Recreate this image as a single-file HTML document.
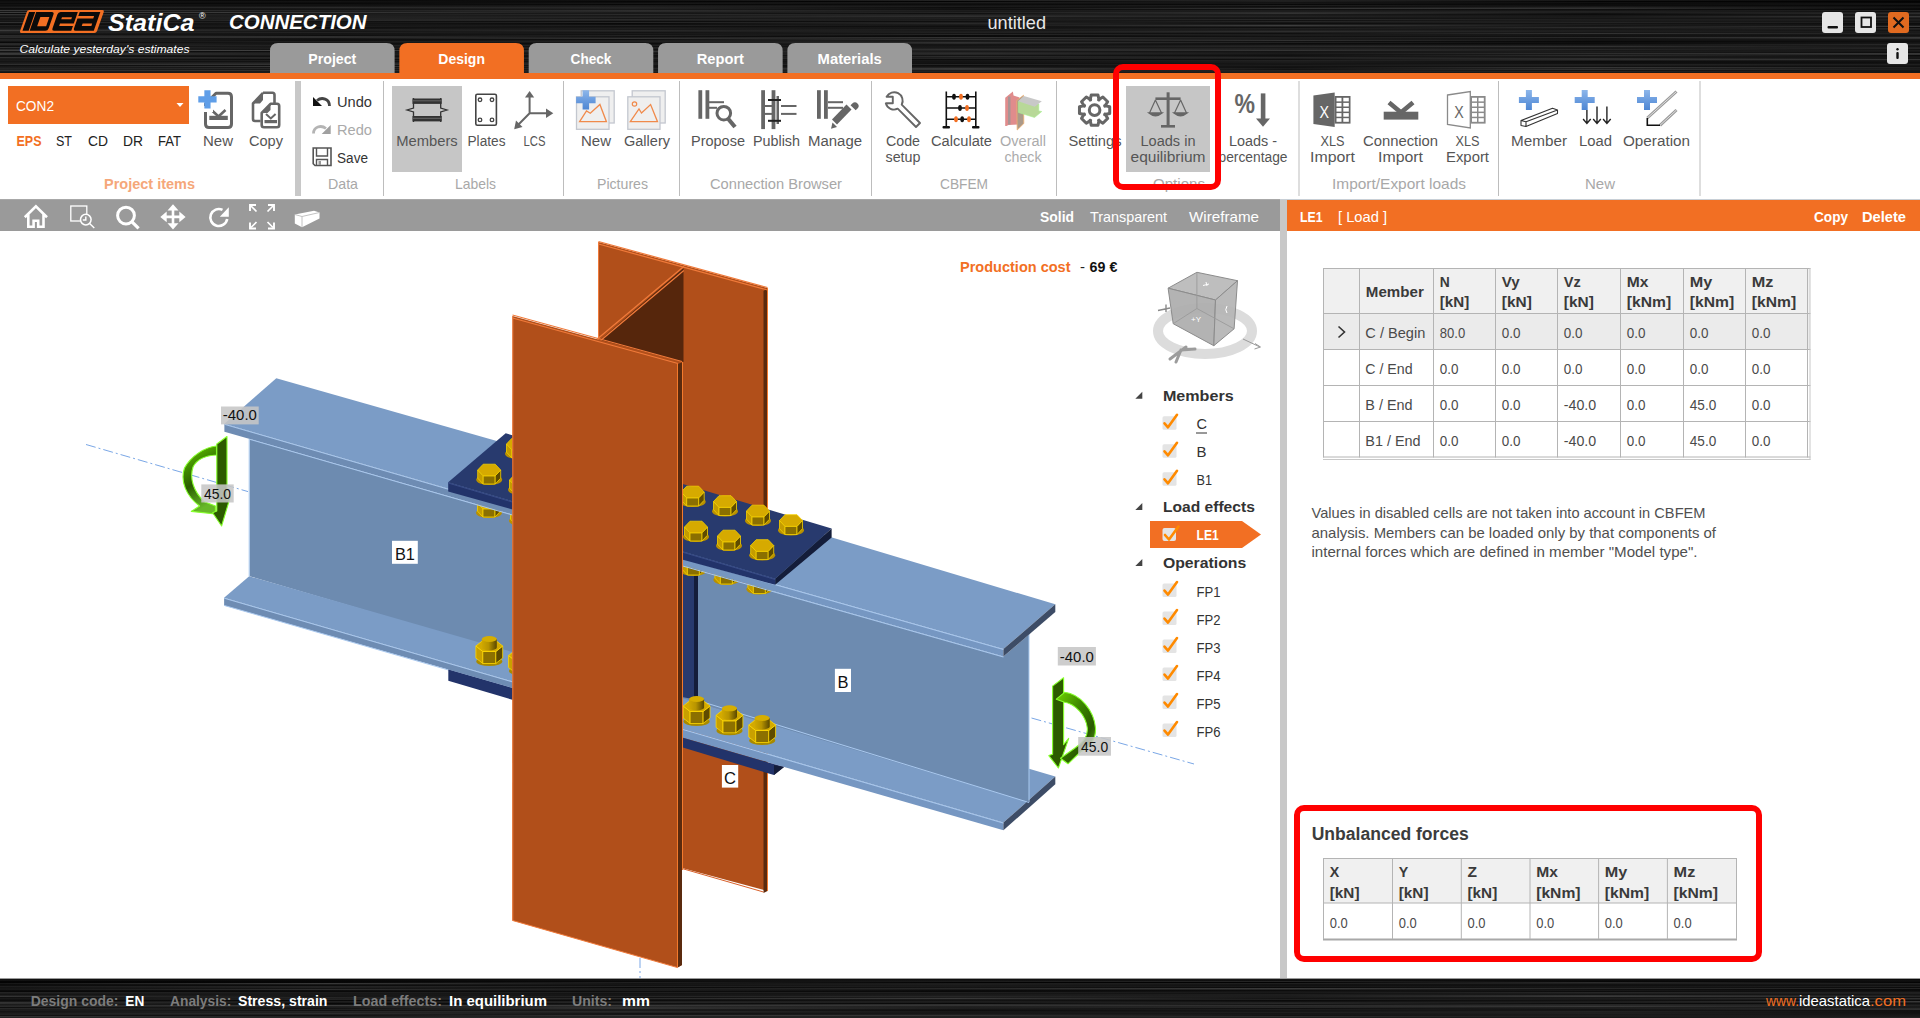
<!DOCTYPE html>
<html><head><meta charset="utf-8"><style>
html,body{margin:0;padding:0;background:#fff;overflow:hidden;width:1920px;height:1018px}
svg{display:block;font-family:"Liberation Sans",sans-serif}
</style></head><body>
<svg width="1920" height="1018" viewBox="0 0 1920 1018" shape-rendering="geometricPrecision">
<g>
<rect x="0" y="0" width="1920" height="73" fill="#101010" />
<linearGradient id="hdr0" x1="0" x2="1" y1="0" y2="0"><stop offset="0.00" stop-color="rgb(11,11,11)"/><stop offset="0.17" stop-color="rgb(9,9,9)"/><stop offset="0.33" stop-color="rgb(18,18,18)"/><stop offset="0.50" stop-color="rgb(36,36,36)"/><stop offset="0.67" stop-color="rgb(32,32,32)"/><stop offset="0.83" stop-color="rgb(24,24,24)"/><stop offset="1.00" stop-color="rgb(10,10,10)"/></linearGradient>
<rect x="0" y="0" width="1920" height="1" fill="url(#hdr0)"/>
<linearGradient id="hdr1" x1="0" x2="1" y1="0" y2="0"><stop offset="0.00" stop-color="rgb(16,16,16)"/><stop offset="0.17" stop-color="rgb(19,19,19)"/><stop offset="0.33" stop-color="rgb(7,7,7)"/><stop offset="0.50" stop-color="rgb(4,4,4)"/><stop offset="0.67" stop-color="rgb(31,31,31)"/><stop offset="0.83" stop-color="rgb(4,4,4)"/><stop offset="1.00" stop-color="rgb(4,4,4)"/></linearGradient>
<rect x="0" y="1" width="1920" height="1" fill="url(#hdr1)"/>
<linearGradient id="hdr2" x1="0" x2="1" y1="0" y2="0"><stop offset="0.00" stop-color="rgb(18,18,18)"/><stop offset="0.17" stop-color="rgb(13,13,13)"/><stop offset="0.33" stop-color="rgb(14,14,14)"/><stop offset="0.50" stop-color="rgb(29,29,29)"/><stop offset="0.67" stop-color="rgb(19,19,19)"/><stop offset="0.83" stop-color="rgb(17,17,17)"/><stop offset="1.00" stop-color="rgb(6,6,6)"/></linearGradient>
<rect x="0" y="2" width="1920" height="1" fill="url(#hdr2)"/>
<linearGradient id="hdr3" x1="0" x2="1" y1="0" y2="0"><stop offset="0.00" stop-color="rgb(11,11,11)"/><stop offset="0.17" stop-color="rgb(8,8,8)"/><stop offset="0.33" stop-color="rgb(24,24,24)"/><stop offset="0.50" stop-color="rgb(17,17,17)"/><stop offset="0.67" stop-color="rgb(22,22,22)"/><stop offset="0.83" stop-color="rgb(9,9,9)"/><stop offset="1.00" stop-color="rgb(22,22,22)"/></linearGradient>
<rect x="0" y="3" width="1920" height="1" fill="url(#hdr3)"/>
<linearGradient id="hdr4" x1="0" x2="1" y1="0" y2="0"><stop offset="0.00" stop-color="rgb(17,17,17)"/><stop offset="0.17" stop-color="rgb(17,17,17)"/><stop offset="0.33" stop-color="rgb(8,8,8)"/><stop offset="0.50" stop-color="rgb(13,13,13)"/><stop offset="0.67" stop-color="rgb(9,9,9)"/><stop offset="0.83" stop-color="rgb(12,12,12)"/><stop offset="1.00" stop-color="rgb(20,20,20)"/></linearGradient>
<rect x="0" y="4" width="1920" height="1" fill="url(#hdr4)"/>
<linearGradient id="hdr5" x1="0" x2="1" y1="0" y2="0"><stop offset="0.00" stop-color="rgb(14,14,14)"/><stop offset="0.17" stop-color="rgb(17,17,17)"/><stop offset="0.33" stop-color="rgb(26,26,26)"/><stop offset="0.50" stop-color="rgb(20,20,20)"/><stop offset="0.67" stop-color="rgb(31,31,31)"/><stop offset="0.83" stop-color="rgb(13,13,13)"/><stop offset="1.00" stop-color="rgb(9,9,9)"/></linearGradient>
<rect x="0" y="5" width="1920" height="1" fill="url(#hdr5)"/>
<linearGradient id="hdr6" x1="0" x2="1" y1="0" y2="0"><stop offset="0.00" stop-color="rgb(20,20,20)"/><stop offset="0.17" stop-color="rgb(25,25,25)"/><stop offset="0.33" stop-color="rgb(30,30,30)"/><stop offset="0.50" stop-color="rgb(28,28,28)"/><stop offset="0.67" stop-color="rgb(13,13,13)"/><stop offset="0.83" stop-color="rgb(24,24,24)"/><stop offset="1.00" stop-color="rgb(15,15,15)"/></linearGradient>
<rect x="0" y="6" width="1920" height="1" fill="url(#hdr6)"/>
<linearGradient id="hdr7" x1="0" x2="1" y1="0" y2="0"><stop offset="0.00" stop-color="rgb(30,30,30)"/><stop offset="0.17" stop-color="rgb(42,42,42)"/><stop offset="0.33" stop-color="rgb(37,37,37)"/><stop offset="0.50" stop-color="rgb(12,12,12)"/><stop offset="0.67" stop-color="rgb(24,24,24)"/><stop offset="0.83" stop-color="rgb(38,38,38)"/><stop offset="1.00" stop-color="rgb(19,19,19)"/></linearGradient>
<rect x="0" y="7" width="1920" height="1" fill="url(#hdr7)"/>
<linearGradient id="hdr8" x1="0" x2="1" y1="0" y2="0"><stop offset="0.00" stop-color="rgb(13,13,13)"/><stop offset="0.17" stop-color="rgb(25,25,25)"/><stop offset="0.33" stop-color="rgb(34,34,34)"/><stop offset="0.50" stop-color="rgb(18,18,18)"/><stop offset="0.67" stop-color="rgb(52,52,52)"/><stop offset="0.83" stop-color="rgb(48,48,48)"/><stop offset="1.00" stop-color="rgb(10,10,10)"/></linearGradient>
<rect x="0" y="8" width="1920" height="1" fill="url(#hdr8)"/>
<linearGradient id="hdr9" x1="0" x2="1" y1="0" y2="0"><stop offset="0.00" stop-color="rgb(17,17,17)"/><stop offset="0.17" stop-color="rgb(20,20,20)"/><stop offset="0.33" stop-color="rgb(26,26,26)"/><stop offset="0.50" stop-color="rgb(16,16,16)"/><stop offset="0.67" stop-color="rgb(16,16,16)"/><stop offset="0.83" stop-color="rgb(15,15,15)"/><stop offset="1.00" stop-color="rgb(9,9,9)"/></linearGradient>
<rect x="0" y="9" width="1920" height="1" fill="url(#hdr9)"/>
<linearGradient id="hdr10" x1="0" x2="1" y1="0" y2="0"><stop offset="0.00" stop-color="rgb(59,59,59)"/><stop offset="0.17" stop-color="rgb(33,33,33)"/><stop offset="0.33" stop-color="rgb(46,46,46)"/><stop offset="0.50" stop-color="rgb(29,29,29)"/><stop offset="0.67" stop-color="rgb(28,28,28)"/><stop offset="0.83" stop-color="rgb(22,22,22)"/><stop offset="1.00" stop-color="rgb(33,33,33)"/></linearGradient>
<rect x="0" y="10" width="1920" height="1" fill="url(#hdr10)"/>
<linearGradient id="hdr11" x1="0" x2="1" y1="0" y2="0"><stop offset="0.00" stop-color="rgb(22,22,22)"/><stop offset="0.17" stop-color="rgb(25,25,25)"/><stop offset="0.33" stop-color="rgb(42,42,42)"/><stop offset="0.50" stop-color="rgb(24,24,24)"/><stop offset="0.67" stop-color="rgb(29,29,29)"/><stop offset="0.83" stop-color="rgb(34,34,34)"/><stop offset="1.00" stop-color="rgb(14,14,14)"/></linearGradient>
<rect x="0" y="11" width="1920" height="1" fill="url(#hdr11)"/>
<linearGradient id="hdr12" x1="0" x2="1" y1="0" y2="0"><stop offset="0.00" stop-color="rgb(60,60,60)"/><stop offset="0.17" stop-color="rgb(56,56,56)"/><stop offset="0.33" stop-color="rgb(25,25,25)"/><stop offset="0.50" stop-color="rgb(35,35,35)"/><stop offset="0.67" stop-color="rgb(44,44,44)"/><stop offset="0.83" stop-color="rgb(31,31,31)"/><stop offset="1.00" stop-color="rgb(32,32,32)"/></linearGradient>
<rect x="0" y="12" width="1920" height="1" fill="url(#hdr12)"/>
<linearGradient id="hdr13" x1="0" x2="1" y1="0" y2="0"><stop offset="0.00" stop-color="rgb(12,12,12)"/><stop offset="0.17" stop-color="rgb(25,25,25)"/><stop offset="0.33" stop-color="rgb(24,24,24)"/><stop offset="0.50" stop-color="rgb(15,15,15)"/><stop offset="0.67" stop-color="rgb(51,51,51)"/><stop offset="0.83" stop-color="rgb(16,16,16)"/><stop offset="1.00" stop-color="rgb(45,45,45)"/></linearGradient>
<rect x="0" y="13" width="1920" height="1" fill="url(#hdr13)"/>
<linearGradient id="hdr14" x1="0" x2="1" y1="0" y2="0"><stop offset="0.00" stop-color="rgb(53,53,53)"/><stop offset="0.17" stop-color="rgb(26,26,26)"/><stop offset="0.33" stop-color="rgb(43,43,43)"/><stop offset="0.50" stop-color="rgb(31,31,31)"/><stop offset="0.67" stop-color="rgb(26,26,26)"/><stop offset="0.83" stop-color="rgb(12,12,12)"/><stop offset="1.00" stop-color="rgb(26,26,26)"/></linearGradient>
<rect x="0" y="14" width="1920" height="1" fill="url(#hdr14)"/>
<linearGradient id="hdr15" x1="0" x2="1" y1="0" y2="0"><stop offset="0.00" stop-color="rgb(29,29,29)"/><stop offset="0.17" stop-color="rgb(31,31,31)"/><stop offset="0.33" stop-color="rgb(23,23,23)"/><stop offset="0.50" stop-color="rgb(42,42,42)"/><stop offset="0.67" stop-color="rgb(27,27,27)"/><stop offset="0.83" stop-color="rgb(22,22,22)"/><stop offset="1.00" stop-color="rgb(24,24,24)"/></linearGradient>
<rect x="0" y="15" width="1920" height="1" fill="url(#hdr15)"/>
<linearGradient id="hdr16" x1="0" x2="1" y1="0" y2="0"><stop offset="0.00" stop-color="rgb(22,22,22)"/><stop offset="0.17" stop-color="rgb(32,32,32)"/><stop offset="0.33" stop-color="rgb(30,30,30)"/><stop offset="0.50" stop-color="rgb(48,48,48)"/><stop offset="0.67" stop-color="rgb(34,34,34)"/><stop offset="0.83" stop-color="rgb(24,24,24)"/><stop offset="1.00" stop-color="rgb(56,56,56)"/></linearGradient>
<rect x="0" y="16" width="1920" height="1" fill="url(#hdr16)"/>
<linearGradient id="hdr17" x1="0" x2="1" y1="0" y2="0"><stop offset="0.00" stop-color="rgb(35,35,35)"/><stop offset="0.17" stop-color="rgb(31,31,31)"/><stop offset="0.33" stop-color="rgb(37,37,37)"/><stop offset="0.50" stop-color="rgb(28,28,28)"/><stop offset="0.67" stop-color="rgb(23,23,23)"/><stop offset="0.83" stop-color="rgb(26,26,26)"/><stop offset="1.00" stop-color="rgb(34,34,34)"/></linearGradient>
<rect x="0" y="17" width="1920" height="1" fill="url(#hdr17)"/>
<linearGradient id="hdr18" x1="0" x2="1" y1="0" y2="0"><stop offset="0.00" stop-color="rgb(23,23,23)"/><stop offset="0.17" stop-color="rgb(37,37,37)"/><stop offset="0.33" stop-color="rgb(21,21,21)"/><stop offset="0.50" stop-color="rgb(32,32,32)"/><stop offset="0.67" stop-color="rgb(19,19,19)"/><stop offset="0.83" stop-color="rgb(21,21,21)"/><stop offset="1.00" stop-color="rgb(21,21,21)"/></linearGradient>
<rect x="0" y="18" width="1920" height="1" fill="url(#hdr18)"/>
<linearGradient id="hdr19" x1="0" x2="1" y1="0" y2="0"><stop offset="0.00" stop-color="rgb(21,21,21)"/><stop offset="0.17" stop-color="rgb(34,34,34)"/><stop offset="0.33" stop-color="rgb(42,42,42)"/><stop offset="0.50" stop-color="rgb(24,24,24)"/><stop offset="0.67" stop-color="rgb(41,41,41)"/><stop offset="0.83" stop-color="rgb(30,30,30)"/><stop offset="1.00" stop-color="rgb(30,30,30)"/></linearGradient>
<rect x="0" y="19" width="1920" height="1" fill="url(#hdr19)"/>
<linearGradient id="hdr20" x1="0" x2="1" y1="0" y2="0"><stop offset="0.00" stop-color="rgb(26,26,26)"/><stop offset="0.17" stop-color="rgb(42,42,42)"/><stop offset="0.33" stop-color="rgb(32,32,32)"/><stop offset="0.50" stop-color="rgb(30,30,30)"/><stop offset="0.67" stop-color="rgb(18,18,18)"/><stop offset="0.83" stop-color="rgb(28,28,28)"/><stop offset="1.00" stop-color="rgb(27,27,27)"/></linearGradient>
<rect x="0" y="20" width="1920" height="1" fill="url(#hdr20)"/>
<linearGradient id="hdr21" x1="0" x2="1" y1="0" y2="0"><stop offset="0.00" stop-color="rgb(20,20,20)"/><stop offset="0.17" stop-color="rgb(17,17,17)"/><stop offset="0.33" stop-color="rgb(14,14,14)"/><stop offset="0.50" stop-color="rgb(15,15,15)"/><stop offset="0.67" stop-color="rgb(38,38,38)"/><stop offset="0.83" stop-color="rgb(25,25,25)"/><stop offset="1.00" stop-color="rgb(20,20,20)"/></linearGradient>
<rect x="0" y="21" width="1920" height="1" fill="url(#hdr21)"/>
<linearGradient id="hdr22" x1="0" x2="1" y1="0" y2="0"><stop offset="0.00" stop-color="rgb(50,50,50)"/><stop offset="0.17" stop-color="rgb(21,21,21)"/><stop offset="0.33" stop-color="rgb(38,38,38)"/><stop offset="0.50" stop-color="rgb(30,30,30)"/><stop offset="0.67" stop-color="rgb(21,21,21)"/><stop offset="0.83" stop-color="rgb(36,36,36)"/><stop offset="1.00" stop-color="rgb(27,27,27)"/></linearGradient>
<rect x="0" y="22" width="1920" height="1" fill="url(#hdr22)"/>
<linearGradient id="hdr23" x1="0" x2="1" y1="0" y2="0"><stop offset="0.00" stop-color="rgb(17,17,17)"/><stop offset="0.17" stop-color="rgb(21,21,21)"/><stop offset="0.33" stop-color="rgb(9,9,9)"/><stop offset="0.50" stop-color="rgb(42,42,42)"/><stop offset="0.67" stop-color="rgb(13,13,13)"/><stop offset="0.83" stop-color="rgb(21,21,21)"/><stop offset="1.00" stop-color="rgb(13,13,13)"/></linearGradient>
<rect x="0" y="23" width="1920" height="1" fill="url(#hdr23)"/>
<linearGradient id="hdr24" x1="0" x2="1" y1="0" y2="0"><stop offset="0.00" stop-color="rgb(12,12,12)"/><stop offset="0.17" stop-color="rgb(24,24,24)"/><stop offset="0.33" stop-color="rgb(15,15,15)"/><stop offset="0.50" stop-color="rgb(29,29,29)"/><stop offset="0.67" stop-color="rgb(29,29,29)"/><stop offset="0.83" stop-color="rgb(29,29,29)"/><stop offset="1.00" stop-color="rgb(15,15,15)"/></linearGradient>
<rect x="0" y="24" width="1920" height="1" fill="url(#hdr24)"/>
<linearGradient id="hdr25" x1="0" x2="1" y1="0" y2="0"><stop offset="0.00" stop-color="rgb(33,33,33)"/><stop offset="0.17" stop-color="rgb(19,19,19)"/><stop offset="0.33" stop-color="rgb(34,34,34)"/><stop offset="0.50" stop-color="rgb(21,21,21)"/><stop offset="0.67" stop-color="rgb(62,62,62)"/><stop offset="0.83" stop-color="rgb(21,21,21)"/><stop offset="1.00" stop-color="rgb(27,27,27)"/></linearGradient>
<rect x="0" y="25" width="1920" height="1" fill="url(#hdr25)"/>
<linearGradient id="hdr26" x1="0" x2="1" y1="0" y2="0"><stop offset="0.00" stop-color="rgb(20,20,20)"/><stop offset="0.17" stop-color="rgb(28,28,28)"/><stop offset="0.33" stop-color="rgb(16,16,16)"/><stop offset="0.50" stop-color="rgb(15,15,15)"/><stop offset="0.67" stop-color="rgb(34,34,34)"/><stop offset="0.83" stop-color="rgb(24,24,24)"/><stop offset="1.00" stop-color="rgb(57,57,57)"/></linearGradient>
<rect x="0" y="26" width="1920" height="1" fill="url(#hdr26)"/>
<linearGradient id="hdr27" x1="0" x2="1" y1="0" y2="0"><stop offset="0.00" stop-color="rgb(23,23,23)"/><stop offset="0.17" stop-color="rgb(14,14,14)"/><stop offset="0.33" stop-color="rgb(24,24,24)"/><stop offset="0.50" stop-color="rgb(22,22,22)"/><stop offset="0.67" stop-color="rgb(14,14,14)"/><stop offset="0.83" stop-color="rgb(47,47,47)"/><stop offset="1.00" stop-color="rgb(10,10,10)"/></linearGradient>
<rect x="0" y="27" width="1920" height="1" fill="url(#hdr27)"/>
<linearGradient id="hdr28" x1="0" x2="1" y1="0" y2="0"><stop offset="0.00" stop-color="rgb(27,27,27)"/><stop offset="0.17" stop-color="rgb(17,17,17)"/><stop offset="0.33" stop-color="rgb(31,31,31)"/><stop offset="0.50" stop-color="rgb(19,19,19)"/><stop offset="0.67" stop-color="rgb(31,31,31)"/><stop offset="0.83" stop-color="rgb(26,26,26)"/><stop offset="1.00" stop-color="rgb(37,37,37)"/></linearGradient>
<rect x="0" y="28" width="1920" height="1" fill="url(#hdr28)"/>
<linearGradient id="hdr29" x1="0" x2="1" y1="0" y2="0"><stop offset="0.00" stop-color="rgb(36,36,36)"/><stop offset="0.17" stop-color="rgb(35,35,35)"/><stop offset="0.33" stop-color="rgb(25,25,25)"/><stop offset="0.50" stop-color="rgb(32,32,32)"/><stop offset="0.67" stop-color="rgb(25,25,25)"/><stop offset="0.83" stop-color="rgb(22,22,22)"/><stop offset="1.00" stop-color="rgb(30,30,30)"/></linearGradient>
<rect x="0" y="29" width="1920" height="1" fill="url(#hdr29)"/>
<linearGradient id="hdr30" x1="0" x2="1" y1="0" y2="0"><stop offset="0.00" stop-color="rgb(60,60,60)"/><stop offset="0.17" stop-color="rgb(27,27,27)"/><stop offset="0.33" stop-color="rgb(41,41,41)"/><stop offset="0.50" stop-color="rgb(23,23,23)"/><stop offset="0.67" stop-color="rgb(32,32,32)"/><stop offset="0.83" stop-color="rgb(30,30,30)"/><stop offset="1.00" stop-color="rgb(19,19,19)"/></linearGradient>
<rect x="0" y="30" width="1920" height="1" fill="url(#hdr30)"/>
<linearGradient id="hdr31" x1="0" x2="1" y1="0" y2="0"><stop offset="0.00" stop-color="rgb(36,36,36)"/><stop offset="0.17" stop-color="rgb(20,20,20)"/><stop offset="0.33" stop-color="rgb(33,33,33)"/><stop offset="0.50" stop-color="rgb(28,28,28)"/><stop offset="0.67" stop-color="rgb(46,46,46)"/><stop offset="0.83" stop-color="rgb(29,29,29)"/><stop offset="1.00" stop-color="rgb(27,27,27)"/></linearGradient>
<rect x="0" y="31" width="1920" height="1" fill="url(#hdr31)"/>
<linearGradient id="hdr32" x1="0" x2="1" y1="0" y2="0"><stop offset="0.00" stop-color="rgb(31,31,31)"/><stop offset="0.17" stop-color="rgb(34,34,34)"/><stop offset="0.33" stop-color="rgb(18,18,18)"/><stop offset="0.50" stop-color="rgb(33,33,33)"/><stop offset="0.67" stop-color="rgb(30,30,30)"/><stop offset="0.83" stop-color="rgb(22,22,22)"/><stop offset="1.00" stop-color="rgb(26,26,26)"/></linearGradient>
<rect x="0" y="32" width="1920" height="1" fill="url(#hdr32)"/>
<linearGradient id="hdr33" x1="0" x2="1" y1="0" y2="0"><stop offset="0.00" stop-color="rgb(25,25,25)"/><stop offset="0.17" stop-color="rgb(20,20,20)"/><stop offset="0.33" stop-color="rgb(26,26,26)"/><stop offset="0.50" stop-color="rgb(20,20,20)"/><stop offset="0.67" stop-color="rgb(15,15,15)"/><stop offset="0.83" stop-color="rgb(51,51,51)"/><stop offset="1.00" stop-color="rgb(30,30,30)"/></linearGradient>
<rect x="0" y="33" width="1920" height="1" fill="url(#hdr33)"/>
<linearGradient id="hdr34" x1="0" x2="1" y1="0" y2="0"><stop offset="0.00" stop-color="rgb(17,17,17)"/><stop offset="0.17" stop-color="rgb(21,21,21)"/><stop offset="0.33" stop-color="rgb(18,18,18)"/><stop offset="0.50" stop-color="rgb(38,38,38)"/><stop offset="0.67" stop-color="rgb(27,27,27)"/><stop offset="0.83" stop-color="rgb(21,21,21)"/><stop offset="1.00" stop-color="rgb(23,23,23)"/></linearGradient>
<rect x="0" y="34" width="1920" height="1" fill="url(#hdr34)"/>
<linearGradient id="hdr35" x1="0" x2="1" y1="0" y2="0"><stop offset="0.00" stop-color="rgb(43,43,43)"/><stop offset="0.17" stop-color="rgb(13,13,13)"/><stop offset="0.33" stop-color="rgb(35,35,35)"/><stop offset="0.50" stop-color="rgb(10,10,10)"/><stop offset="0.67" stop-color="rgb(28,28,28)"/><stop offset="0.83" stop-color="rgb(19,19,19)"/><stop offset="1.00" stop-color="rgb(18,18,18)"/></linearGradient>
<rect x="0" y="35" width="1920" height="1" fill="url(#hdr35)"/>
<linearGradient id="hdr36" x1="0" x2="1" y1="0" y2="0"><stop offset="0.00" stop-color="rgb(39,39,39)"/><stop offset="0.17" stop-color="rgb(46,46,46)"/><stop offset="0.33" stop-color="rgb(17,17,17)"/><stop offset="0.50" stop-color="rgb(10,10,10)"/><stop offset="0.67" stop-color="rgb(18,18,18)"/><stop offset="0.83" stop-color="rgb(17,17,17)"/><stop offset="1.00" stop-color="rgb(27,27,27)"/></linearGradient>
<rect x="0" y="36" width="1920" height="1" fill="url(#hdr36)"/>
<linearGradient id="hdr37" x1="0" x2="1" y1="0" y2="0"><stop offset="0.00" stop-color="rgb(42,42,42)"/><stop offset="0.17" stop-color="rgb(46,46,46)"/><stop offset="0.33" stop-color="rgb(29,29,29)"/><stop offset="0.50" stop-color="rgb(51,51,51)"/><stop offset="0.67" stop-color="rgb(29,29,29)"/><stop offset="0.83" stop-color="rgb(41,41,41)"/><stop offset="1.00" stop-color="rgb(57,57,57)"/></linearGradient>
<rect x="0" y="37" width="1920" height="1" fill="url(#hdr37)"/>
<linearGradient id="hdr38" x1="0" x2="1" y1="0" y2="0"><stop offset="0.00" stop-color="rgb(22,22,22)"/><stop offset="0.17" stop-color="rgb(20,20,20)"/><stop offset="0.33" stop-color="rgb(51,51,51)"/><stop offset="0.50" stop-color="rgb(28,28,28)"/><stop offset="0.67" stop-color="rgb(28,28,28)"/><stop offset="0.83" stop-color="rgb(17,17,17)"/><stop offset="1.00" stop-color="rgb(48,48,48)"/></linearGradient>
<rect x="0" y="38" width="1920" height="1" fill="url(#hdr38)"/>
<linearGradient id="hdr39" x1="0" x2="1" y1="0" y2="0"><stop offset="0.00" stop-color="rgb(35,35,35)"/><stop offset="0.17" stop-color="rgb(16,16,16)"/><stop offset="0.33" stop-color="rgb(14,14,14)"/><stop offset="0.50" stop-color="rgb(51,51,51)"/><stop offset="0.67" stop-color="rgb(27,27,27)"/><stop offset="0.83" stop-color="rgb(20,20,20)"/><stop offset="1.00" stop-color="rgb(22,22,22)"/></linearGradient>
<rect x="0" y="39" width="1920" height="1" fill="url(#hdr39)"/>
<linearGradient id="hdr40" x1="0" x2="1" y1="0" y2="0"><stop offset="0.00" stop-color="rgb(33,33,33)"/><stop offset="0.17" stop-color="rgb(14,14,14)"/><stop offset="0.33" stop-color="rgb(29,29,29)"/><stop offset="0.50" stop-color="rgb(24,24,24)"/><stop offset="0.67" stop-color="rgb(50,50,50)"/><stop offset="0.83" stop-color="rgb(18,18,18)"/><stop offset="1.00" stop-color="rgb(18,18,18)"/></linearGradient>
<rect x="0" y="40" width="1920" height="1" fill="url(#hdr40)"/>
<linearGradient id="hdr41" x1="0" x2="1" y1="0" y2="0"><stop offset="0.00" stop-color="rgb(20,20,20)"/><stop offset="0.17" stop-color="rgb(30,30,30)"/><stop offset="0.33" stop-color="rgb(32,32,32)"/><stop offset="0.50" stop-color="rgb(27,27,27)"/><stop offset="0.67" stop-color="rgb(17,17,17)"/><stop offset="0.83" stop-color="rgb(8,8,8)"/><stop offset="1.00" stop-color="rgb(15,15,15)"/></linearGradient>
<rect x="0" y="41" width="1920" height="1" fill="url(#hdr41)"/>
<linearGradient id="hdr42" x1="0" x2="1" y1="0" y2="0"><stop offset="0.00" stop-color="rgb(9,9,9)"/><stop offset="0.17" stop-color="rgb(24,24,24)"/><stop offset="0.33" stop-color="rgb(21,21,21)"/><stop offset="0.50" stop-color="rgb(49,49,49)"/><stop offset="0.67" stop-color="rgb(33,33,33)"/><stop offset="0.83" stop-color="rgb(13,13,13)"/><stop offset="1.00" stop-color="rgb(19,19,19)"/></linearGradient>
<rect x="0" y="42" width="1920" height="1" fill="url(#hdr42)"/>
<linearGradient id="hdr43" x1="0" x2="1" y1="0" y2="0"><stop offset="0.00" stop-color="rgb(40,40,40)"/><stop offset="0.17" stop-color="rgb(16,16,16)"/><stop offset="0.33" stop-color="rgb(10,10,10)"/><stop offset="0.50" stop-color="rgb(42,42,42)"/><stop offset="0.67" stop-color="rgb(12,12,12)"/><stop offset="0.83" stop-color="rgb(11,11,11)"/><stop offset="1.00" stop-color="rgb(24,24,24)"/></linearGradient>
<rect x="0" y="43" width="1920" height="1" fill="url(#hdr43)"/>
<linearGradient id="hdr44" x1="0" x2="1" y1="0" y2="0"><stop offset="0.00" stop-color="rgb(43,43,43)"/><stop offset="0.17" stop-color="rgb(19,19,19)"/><stop offset="0.33" stop-color="rgb(21,21,21)"/><stop offset="0.50" stop-color="rgb(20,20,20)"/><stop offset="0.67" stop-color="rgb(18,18,18)"/><stop offset="0.83" stop-color="rgb(19,19,19)"/><stop offset="1.00" stop-color="rgb(42,42,42)"/></linearGradient>
<rect x="0" y="44" width="1920" height="1" fill="url(#hdr44)"/>
<linearGradient id="hdr45" x1="0" x2="1" y1="0" y2="0"><stop offset="0.00" stop-color="rgb(27,27,27)"/><stop offset="0.17" stop-color="rgb(35,35,35)"/><stop offset="0.33" stop-color="rgb(33,33,33)"/><stop offset="0.50" stop-color="rgb(19,19,19)"/><stop offset="0.67" stop-color="rgb(33,33,33)"/><stop offset="0.83" stop-color="rgb(28,28,28)"/><stop offset="1.00" stop-color="rgb(25,25,25)"/></linearGradient>
<rect x="0" y="45" width="1920" height="1" fill="url(#hdr45)"/>
<linearGradient id="hdr46" x1="0" x2="1" y1="0" y2="0"><stop offset="0.00" stop-color="rgb(15,15,15)"/><stop offset="0.17" stop-color="rgb(27,27,27)"/><stop offset="0.33" stop-color="rgb(16,16,16)"/><stop offset="0.50" stop-color="rgb(24,24,24)"/><stop offset="0.67" stop-color="rgb(39,39,39)"/><stop offset="0.83" stop-color="rgb(51,51,51)"/><stop offset="1.00" stop-color="rgb(19,19,19)"/></linearGradient>
<rect x="0" y="46" width="1920" height="1" fill="url(#hdr46)"/>
<linearGradient id="hdr47" x1="0" x2="1" y1="0" y2="0"><stop offset="0.00" stop-color="rgb(50,50,50)"/><stop offset="0.17" stop-color="rgb(22,22,22)"/><stop offset="0.33" stop-color="rgb(37,37,37)"/><stop offset="0.50" stop-color="rgb(23,23,23)"/><stop offset="0.67" stop-color="rgb(24,24,24)"/><stop offset="0.83" stop-color="rgb(25,25,25)"/><stop offset="1.00" stop-color="rgb(33,33,33)"/></linearGradient>
<rect x="0" y="47" width="1920" height="1" fill="url(#hdr47)"/>
<linearGradient id="hdr48" x1="0" x2="1" y1="0" y2="0"><stop offset="0.00" stop-color="rgb(21,21,21)"/><stop offset="0.17" stop-color="rgb(31,31,31)"/><stop offset="0.33" stop-color="rgb(31,31,31)"/><stop offset="0.50" stop-color="rgb(32,32,32)"/><stop offset="0.67" stop-color="rgb(33,33,33)"/><stop offset="0.83" stop-color="rgb(23,23,23)"/><stop offset="1.00" stop-color="rgb(38,38,38)"/></linearGradient>
<rect x="0" y="48" width="1920" height="1" fill="url(#hdr48)"/>
<linearGradient id="hdr49" x1="0" x2="1" y1="0" y2="0"><stop offset="0.00" stop-color="rgb(43,43,43)"/><stop offset="0.17" stop-color="rgb(16,16,16)"/><stop offset="0.33" stop-color="rgb(14,14,14)"/><stop offset="0.50" stop-color="rgb(49,49,49)"/><stop offset="0.67" stop-color="rgb(36,36,36)"/><stop offset="0.83" stop-color="rgb(39,39,39)"/><stop offset="1.00" stop-color="rgb(18,18,18)"/></linearGradient>
<rect x="0" y="49" width="1920" height="1" fill="url(#hdr49)"/>
<linearGradient id="hdr50" x1="0" x2="1" y1="0" y2="0"><stop offset="0.00" stop-color="rgb(62,62,62)"/><stop offset="0.17" stop-color="rgb(63,63,63)"/><stop offset="0.33" stop-color="rgb(27,27,27)"/><stop offset="0.50" stop-color="rgb(34,34,34)"/><stop offset="0.67" stop-color="rgb(53,53,53)"/><stop offset="0.83" stop-color="rgb(23,23,23)"/><stop offset="1.00" stop-color="rgb(27,27,27)"/></linearGradient>
<rect x="0" y="50" width="1920" height="1" fill="url(#hdr50)"/>
<linearGradient id="hdr51" x1="0" x2="1" y1="0" y2="0"><stop offset="0.00" stop-color="rgb(18,18,18)"/><stop offset="0.17" stop-color="rgb(12,12,12)"/><stop offset="0.33" stop-color="rgb(50,50,50)"/><stop offset="0.50" stop-color="rgb(25,25,25)"/><stop offset="0.67" stop-color="rgb(20,20,20)"/><stop offset="0.83" stop-color="rgb(29,29,29)"/><stop offset="1.00" stop-color="rgb(22,22,22)"/></linearGradient>
<rect x="0" y="51" width="1920" height="1" fill="url(#hdr51)"/>
<linearGradient id="hdr52" x1="0" x2="1" y1="0" y2="0"><stop offset="0.00" stop-color="rgb(37,37,37)"/><stop offset="0.17" stop-color="rgb(26,26,26)"/><stop offset="0.33" stop-color="rgb(26,26,26)"/><stop offset="0.50" stop-color="rgb(38,38,38)"/><stop offset="0.67" stop-color="rgb(23,23,23)"/><stop offset="0.83" stop-color="rgb(26,26,26)"/><stop offset="1.00" stop-color="rgb(13,13,13)"/></linearGradient>
<rect x="0" y="52" width="1920" height="1" fill="url(#hdr52)"/>
<linearGradient id="hdr53" x1="0" x2="1" y1="0" y2="0"><stop offset="0.00" stop-color="rgb(59,59,59)"/><stop offset="0.17" stop-color="rgb(29,29,29)"/><stop offset="0.33" stop-color="rgb(17,17,17)"/><stop offset="0.50" stop-color="rgb(45,45,45)"/><stop offset="0.67" stop-color="rgb(26,26,26)"/><stop offset="0.83" stop-color="rgb(45,45,45)"/><stop offset="1.00" stop-color="rgb(54,54,54)"/></linearGradient>
<rect x="0" y="53" width="1920" height="1" fill="url(#hdr53)"/>
<linearGradient id="hdr54" x1="0" x2="1" y1="0" y2="0"><stop offset="0.00" stop-color="rgb(55,55,55)"/><stop offset="0.17" stop-color="rgb(30,30,30)"/><stop offset="0.33" stop-color="rgb(31,31,31)"/><stop offset="0.50" stop-color="rgb(38,38,38)"/><stop offset="0.67" stop-color="rgb(20,20,20)"/><stop offset="0.83" stop-color="rgb(25,25,25)"/><stop offset="1.00" stop-color="rgb(49,49,49)"/></linearGradient>
<rect x="0" y="54" width="1920" height="1" fill="url(#hdr54)"/>
<linearGradient id="hdr55" x1="0" x2="1" y1="0" y2="0"><stop offset="0.00" stop-color="rgb(19,19,19)"/><stop offset="0.17" stop-color="rgb(25,25,25)"/><stop offset="0.33" stop-color="rgb(16,16,16)"/><stop offset="0.50" stop-color="rgb(20,20,20)"/><stop offset="0.67" stop-color="rgb(16,16,16)"/><stop offset="0.83" stop-color="rgb(46,46,46)"/><stop offset="1.00" stop-color="rgb(10,10,10)"/></linearGradient>
<rect x="0" y="55" width="1920" height="1" fill="url(#hdr55)"/>
<linearGradient id="hdr56" x1="0" x2="1" y1="0" y2="0"><stop offset="0.00" stop-color="rgb(17,17,17)"/><stop offset="0.17" stop-color="rgb(17,17,17)"/><stop offset="0.33" stop-color="rgb(18,18,18)"/><stop offset="0.50" stop-color="rgb(44,44,44)"/><stop offset="0.67" stop-color="rgb(21,21,21)"/><stop offset="0.83" stop-color="rgb(26,26,26)"/><stop offset="1.00" stop-color="rgb(19,19,19)"/></linearGradient>
<rect x="0" y="56" width="1920" height="1" fill="url(#hdr56)"/>
<linearGradient id="hdr57" x1="0" x2="1" y1="0" y2="0"><stop offset="0.00" stop-color="rgb(48,48,48)"/><stop offset="0.17" stop-color="rgb(35,35,35)"/><stop offset="0.33" stop-color="rgb(27,27,27)"/><stop offset="0.50" stop-color="rgb(29,29,29)"/><stop offset="0.67" stop-color="rgb(40,40,40)"/><stop offset="0.83" stop-color="rgb(22,22,22)"/><stop offset="1.00" stop-color="rgb(22,22,22)"/></linearGradient>
<rect x="0" y="57" width="1920" height="1" fill="url(#hdr57)"/>
<linearGradient id="hdr58" x1="0" x2="1" y1="0" y2="0"><stop offset="0.00" stop-color="rgb(27,27,27)"/><stop offset="0.17" stop-color="rgb(36,36,36)"/><stop offset="0.33" stop-color="rgb(37,37,37)"/><stop offset="0.50" stop-color="rgb(34,34,34)"/><stop offset="0.67" stop-color="rgb(30,30,30)"/><stop offset="0.83" stop-color="rgb(46,46,46)"/><stop offset="1.00" stop-color="rgb(20,20,20)"/></linearGradient>
<rect x="0" y="58" width="1920" height="1" fill="url(#hdr58)"/>
<linearGradient id="hdr59" x1="0" x2="1" y1="0" y2="0"><stop offset="0.00" stop-color="rgb(24,24,24)"/><stop offset="0.17" stop-color="rgb(11,11,11)"/><stop offset="0.33" stop-color="rgb(23,23,23)"/><stop offset="0.50" stop-color="rgb(12,12,12)"/><stop offset="0.67" stop-color="rgb(16,16,16)"/><stop offset="0.83" stop-color="rgb(47,47,47)"/><stop offset="1.00" stop-color="rgb(51,51,51)"/></linearGradient>
<rect x="0" y="59" width="1920" height="1" fill="url(#hdr59)"/>
<linearGradient id="hdr60" x1="0" x2="1" y1="0" y2="0"><stop offset="0.00" stop-color="rgb(26,26,26)"/><stop offset="0.17" stop-color="rgb(29,29,29)"/><stop offset="0.33" stop-color="rgb(24,24,24)"/><stop offset="0.50" stop-color="rgb(22,22,22)"/><stop offset="0.67" stop-color="rgb(34,34,34)"/><stop offset="0.83" stop-color="rgb(29,29,29)"/><stop offset="1.00" stop-color="rgb(23,23,23)"/></linearGradient>
<rect x="0" y="60" width="1920" height="1" fill="url(#hdr60)"/>
<linearGradient id="hdr61" x1="0" x2="1" y1="0" y2="0"><stop offset="0.00" stop-color="rgb(20,20,20)"/><stop offset="0.17" stop-color="rgb(17,17,17)"/><stop offset="0.33" stop-color="rgb(18,18,18)"/><stop offset="0.50" stop-color="rgb(19,19,19)"/><stop offset="0.67" stop-color="rgb(29,29,29)"/><stop offset="0.83" stop-color="rgb(12,12,12)"/><stop offset="1.00" stop-color="rgb(19,19,19)"/></linearGradient>
<rect x="0" y="61" width="1920" height="1" fill="url(#hdr61)"/>
<linearGradient id="hdr62" x1="0" x2="1" y1="0" y2="0"><stop offset="0.00" stop-color="rgb(25,25,25)"/><stop offset="0.17" stop-color="rgb(31,31,31)"/><stop offset="0.33" stop-color="rgb(27,27,27)"/><stop offset="0.50" stop-color="rgb(18,18,18)"/><stop offset="0.67" stop-color="rgb(27,27,27)"/><stop offset="0.83" stop-color="rgb(14,14,14)"/><stop offset="1.00" stop-color="rgb(15,15,15)"/></linearGradient>
<rect x="0" y="62" width="1920" height="1" fill="url(#hdr62)"/>
<linearGradient id="hdr63" x1="0" x2="1" y1="0" y2="0"><stop offset="0.00" stop-color="rgb(30,30,30)"/><stop offset="0.17" stop-color="rgb(41,41,41)"/><stop offset="0.33" stop-color="rgb(30,30,30)"/><stop offset="0.50" stop-color="rgb(15,15,15)"/><stop offset="0.67" stop-color="rgb(22,22,22)"/><stop offset="0.83" stop-color="rgb(16,16,16)"/><stop offset="1.00" stop-color="rgb(19,19,19)"/></linearGradient>
<rect x="0" y="63" width="1920" height="1" fill="url(#hdr63)"/>
<linearGradient id="hdr64" x1="0" x2="1" y1="0" y2="0"><stop offset="0.00" stop-color="rgb(46,46,46)"/><stop offset="0.17" stop-color="rgb(50,50,50)"/><stop offset="0.33" stop-color="rgb(30,30,30)"/><stop offset="0.50" stop-color="rgb(36,36,36)"/><stop offset="0.67" stop-color="rgb(20,20,20)"/><stop offset="0.83" stop-color="rgb(33,33,33)"/><stop offset="1.00" stop-color="rgb(31,31,31)"/></linearGradient>
<rect x="0" y="64" width="1920" height="1" fill="url(#hdr64)"/>
<linearGradient id="hdr65" x1="0" x2="1" y1="0" y2="0"><stop offset="0.00" stop-color="rgb(15,15,15)"/><stop offset="0.17" stop-color="rgb(18,18,18)"/><stop offset="0.33" stop-color="rgb(19,19,19)"/><stop offset="0.50" stop-color="rgb(13,13,13)"/><stop offset="0.67" stop-color="rgb(28,28,28)"/><stop offset="0.83" stop-color="rgb(28,28,28)"/><stop offset="1.00" stop-color="rgb(21,21,21)"/></linearGradient>
<rect x="0" y="65" width="1920" height="1" fill="url(#hdr65)"/>
<linearGradient id="hdr66" x1="0" x2="1" y1="0" y2="0"><stop offset="0.00" stop-color="rgb(22,22,22)"/><stop offset="0.17" stop-color="rgb(61,61,61)"/><stop offset="0.33" stop-color="rgb(18,18,18)"/><stop offset="0.50" stop-color="rgb(19,19,19)"/><stop offset="0.67" stop-color="rgb(19,19,19)"/><stop offset="0.83" stop-color="rgb(18,18,18)"/><stop offset="1.00" stop-color="rgb(16,16,16)"/></linearGradient>
<rect x="0" y="66" width="1920" height="1" fill="url(#hdr66)"/>
<linearGradient id="hdr67" x1="0" x2="1" y1="0" y2="0"><stop offset="0.00" stop-color="rgb(28,28,28)"/><stop offset="0.17" stop-color="rgb(20,20,20)"/><stop offset="0.33" stop-color="rgb(22,22,22)"/><stop offset="0.50" stop-color="rgb(32,32,32)"/><stop offset="0.67" stop-color="rgb(16,16,16)"/><stop offset="0.83" stop-color="rgb(55,55,55)"/><stop offset="1.00" stop-color="rgb(32,32,32)"/></linearGradient>
<rect x="0" y="67" width="1920" height="1" fill="url(#hdr67)"/>
<linearGradient id="hdr68" x1="0" x2="1" y1="0" y2="0"><stop offset="0.00" stop-color="rgb(35,35,35)"/><stop offset="0.17" stop-color="rgb(39,39,39)"/><stop offset="0.33" stop-color="rgb(35,35,35)"/><stop offset="0.50" stop-color="rgb(56,56,56)"/><stop offset="0.67" stop-color="rgb(25,25,25)"/><stop offset="0.83" stop-color="rgb(31,31,31)"/><stop offset="1.00" stop-color="rgb(26,26,26)"/></linearGradient>
<rect x="0" y="68" width="1920" height="1" fill="url(#hdr68)"/>
<linearGradient id="hdr69" x1="0" x2="1" y1="0" y2="0"><stop offset="0.00" stop-color="rgb(31,31,31)"/><stop offset="0.17" stop-color="rgb(21,21,21)"/><stop offset="0.33" stop-color="rgb(24,24,24)"/><stop offset="0.50" stop-color="rgb(53,53,53)"/><stop offset="0.67" stop-color="rgb(18,18,18)"/><stop offset="0.83" stop-color="rgb(51,51,51)"/><stop offset="1.00" stop-color="rgb(28,28,28)"/></linearGradient>
<rect x="0" y="69" width="1920" height="1" fill="url(#hdr69)"/>
<linearGradient id="hdr70" x1="0" x2="1" y1="0" y2="0"><stop offset="0.00" stop-color="rgb(48,48,48)"/><stop offset="0.17" stop-color="rgb(45,45,45)"/><stop offset="0.33" stop-color="rgb(29,29,29)"/><stop offset="0.50" stop-color="rgb(29,29,29)"/><stop offset="0.67" stop-color="rgb(34,34,34)"/><stop offset="0.83" stop-color="rgb(19,19,19)"/><stop offset="1.00" stop-color="rgb(24,24,24)"/></linearGradient>
<rect x="0" y="70" width="1920" height="1" fill="url(#hdr70)"/>
<linearGradient id="hdr71" x1="0" x2="1" y1="0" y2="0"><stop offset="0.00" stop-color="rgb(27,27,27)"/><stop offset="0.17" stop-color="rgb(25,25,25)"/><stop offset="0.33" stop-color="rgb(35,35,35)"/><stop offset="0.50" stop-color="rgb(33,33,33)"/><stop offset="0.67" stop-color="rgb(30,30,30)"/><stop offset="0.83" stop-color="rgb(35,35,35)"/><stop offset="1.00" stop-color="rgb(21,21,21)"/></linearGradient>
<rect x="0" y="71" width="1920" height="1" fill="url(#hdr71)"/>
<linearGradient id="hdr72" x1="0" x2="1" y1="0" y2="0"><stop offset="0.00" stop-color="rgb(18,18,18)"/><stop offset="0.17" stop-color="rgb(30,30,30)"/><stop offset="0.33" stop-color="rgb(27,27,27)"/><stop offset="0.50" stop-color="rgb(23,23,23)"/><stop offset="0.67" stop-color="rgb(26,26,26)"/><stop offset="0.83" stop-color="rgb(24,24,24)"/><stop offset="1.00" stop-color="rgb(23,23,23)"/></linearGradient>
<rect x="0" y="72" width="1920" height="1" fill="url(#hdr72)"/>
</g>
<rect x="0" y="73" width="1920" height="6" fill="#f26f23" />
<rect x="0" y="79" width="1920" height="120" fill="#ffffff" />
<rect x="1280" y="199" width="640" height="1" fill="#c8cfd6" />
<rect x="0" y="200" width="1280" height="31" fill="#9a9a9a" />
<rect x="0" y="199" width="1280" height="1" fill="#a8a8a8" />
<path d="M270.0,73 L270.0,51 Q270.0,43 278.0,43 L386.6,43 Q394.6,43 394.6,51 L394.6,73 Z" fill="#9a9a9a"/>
<text x="332.3" y="64" font-size="15.5" fill="#ffffff" font-weight="bold" font-style="normal" text-anchor="middle" textLength="48" lengthAdjust="spacingAndGlyphs" >Project</text>
<path d="M399.35,73 L399.35,51 Q399.35,43 407.35,43 L515.95,43 Q523.95,43 523.95,51 L523.95,73 Z" fill="#f26f23"/>
<text x="461.65" y="64" font-size="15.5" fill="#ffffff" font-weight="bold" font-style="normal" text-anchor="middle" textLength="46.6" lengthAdjust="spacingAndGlyphs" >Design</text>
<path d="M528.7,73 L528.7,51 Q528.7,43 536.7,43 L645.3000000000001,43 Q653.3000000000001,43 653.3000000000001,51 L653.3000000000001,73 Z" fill="#9a9a9a"/>
<text x="591.0" y="64" font-size="15.5" fill="#ffffff" font-weight="bold" font-style="normal" text-anchor="middle" textLength="40.8" lengthAdjust="spacingAndGlyphs" >Check</text>
<path d="M658.05,73 L658.05,51 Q658.05,43 666.05,43 L774.65,43 Q782.65,43 782.65,51 L782.65,73 Z" fill="#9a9a9a"/>
<text x="720.35" y="64" font-size="15.5" fill="#ffffff" font-weight="bold" font-style="normal" text-anchor="middle" textLength="47.3" lengthAdjust="spacingAndGlyphs" >Report</text>
<path d="M787.4,73 L787.4,51 Q787.4,43 795.4,43 L904.0,43 Q912.0,43 912.0,51 L912.0,73 Z" fill="#9a9a9a"/>
<text x="849.7" y="64" font-size="15.5" fill="#ffffff" font-weight="bold" font-style="normal" text-anchor="middle" textLength="64.2" lengthAdjust="spacingAndGlyphs" >Materials</text>
<g transform="matrix(1,0,-0.35,1,7.525,0)">
<rect x="23.4" y="9.9" width="77" height="23.2" fill="#f26f23" rx="2"/>
<rect x="25.7" y="12" width="6.2" height="18.7" fill="#0a0a0a" />
<path d="M32.9,12 L48.5,12 Q51,12 51,14.5 L51,28.2 Q51,30.7 48.5,30.7 L32.9,30.7 Z" fill="#0a0a0a"/>
<rect x="38.8" y="17" width="9" height="9.2" fill="#f26f23" />
<path d="M57.3,12 L74.5,12 L74.5,23.5 L60.7,23.5 L60.7,25.9 L74.5,25.9 L74.5,30.7 L57.3,30.7 Q54.9,30.7 54.9,28.2 L54.9,14.5 Q54.9,12 57.3,12 Z" fill="#0a0a0a"/>
<rect x="60.5" y="17.3" width="10" height="1.9" fill="#f26f23" />
<path d="M76.4,12 L97,12 L97,30.7 L78.8,30.7 Q76.4,30.7 76.4,28.2 L76.4,18.5 L92.2,18.5 L92.2,16.1 L76.4,16.1 Z" fill="#0a0a0a"/>
<rect x="83.3" y="23.5" width="9.6" height="2.4" fill="#f26f23" />
</g>
<text x="108" y="30.5" font-size="24.5" fill="#ffffff" font-weight="bold" font-style="italic" text-anchor="start" textLength="86.5" lengthAdjust="spacingAndGlyphs" >StatiCa</text>
<text x="199" y="19" font-size="9" fill="#ffffff" font-weight="normal" font-style="normal" text-anchor="start" >®</text>
<text x="229" y="29.3" font-size="19.5" fill="#ffffff" font-weight="bold" font-style="italic" text-anchor="start" textLength="137.5" lengthAdjust="spacingAndGlyphs" >CONNECTION</text>
<text x="19.5" y="53.4" font-size="11" fill="#ffffff" font-weight="normal" font-style="italic" text-anchor="start" textLength="170" lengthAdjust="spacingAndGlyphs" >Calculate yesterday&#x27;s estimates</text>
<text x="987.5" y="29.3" font-size="19" fill="#e8e8e8" font-weight="normal" font-style="normal" text-anchor="start" textLength="58.5" lengthAdjust="spacingAndGlyphs" >untitled</text>
<rect x="1822" y="12" width="21" height="21" fill="#e6e6e6" rx="3"/>
<rect x="1855" y="12" width="21" height="21" fill="#e6e6e6" rx="3"/>
<rect x="1888" y="12" width="21" height="21" fill="#e06a20" rx="3"/>
<rect x="1887" y="43" width="21" height="21" fill="#e6e6e6" rx="3"/>
<rect x="1827.5" y="26" width="10.5" height="2.5" fill="#111" rx="1"/>
<rect x="1861.5" y="17.5" width="9.5" height="9.5" fill="none" stroke="#111" stroke-width="1.8"/>
<path d="M1893.5,17.5 L1903.5,27.5 M1903.5,17.5 L1893.5,27.5" stroke="#111" stroke-width="2"/>
<rect x="1896.3" y="48" width="2.4" height="2.4" fill="#111" rx="1.2"/>
<rect x="1896.3" y="52" width="2.4" height="7" fill="#111" rx="1"/>
<rect x="8" y="86" width="181" height="38" fill="#f26f23" />
<text x="16" y="111.3" font-size="15.5" fill="#ffffff" font-weight="normal" font-style="normal" text-anchor="start" textLength="38" lengthAdjust="spacingAndGlyphs" >CON2</text>
<polygon points="176.5,103 183.5,103 180,107" fill="#ffffff" />
<text x="16.5" y="146" font-size="14.5" fill="#f26f23" font-weight="bold" font-style="normal" text-anchor="start" textLength="25" lengthAdjust="spacingAndGlyphs" >EPS</text>
<text x="56" y="146" font-size="14.5" fill="#222" font-weight="normal" font-style="normal" text-anchor="start" textLength="16" lengthAdjust="spacingAndGlyphs" >ST</text>
<text x="88" y="146" font-size="14.5" fill="#222" font-weight="normal" font-style="normal" text-anchor="start" textLength="20" lengthAdjust="spacingAndGlyphs" >CD</text>
<text x="123" y="146" font-size="14.5" fill="#222" font-weight="normal" font-style="normal" text-anchor="start" textLength="20" lengthAdjust="spacingAndGlyphs" >DR</text>
<text x="158" y="146" font-size="14.5" fill="#222" font-weight="normal" font-style="normal" text-anchor="start" textLength="23" lengthAdjust="spacingAndGlyphs" >FAT</text>
<text x="203" y="146" font-size="15.5" fill="#555" font-weight="normal" font-style="normal" text-anchor="start" textLength="30" lengthAdjust="spacingAndGlyphs" >New</text>
<text x="249" y="146" font-size="15.5" fill="#555" font-weight="normal" font-style="normal" text-anchor="start" textLength="34" lengthAdjust="spacingAndGlyphs" >Copy</text>
<text x="104" y="189" font-size="14.5" fill="#f5a77a" font-weight="bold" font-style="normal" text-anchor="start" textLength="91" lengthAdjust="spacingAndGlyphs" >Project items</text>
<rect x="295" y="81" width="6" height="115" fill="#c8c8c8" />
<text x="337" y="107" font-size="15.5" fill="#333" font-weight="normal" font-style="normal" text-anchor="start" textLength="35" lengthAdjust="spacingAndGlyphs" >Undo</text>
<text x="337" y="135" font-size="15.5" fill="#aaaaaa" font-weight="normal" font-style="normal" text-anchor="start" textLength="35" lengthAdjust="spacingAndGlyphs" >Redo</text>
<text x="337" y="163" font-size="15.5" fill="#333" font-weight="normal" font-style="normal" text-anchor="start" textLength="31" lengthAdjust="spacingAndGlyphs" >Save</text>
<text x="328" y="189" font-size="14.5" fill="#a8a8a8" font-weight="normal" font-style="normal" text-anchor="start" textLength="30" lengthAdjust="spacingAndGlyphs" >Data</text>
<rect x="383" y="81" width="1" height="115" fill="#bdbdbd" />
<rect x="563" y="81" width="1" height="115" fill="#bdbdbd" />
<rect x="679" y="81" width="1" height="115" fill="#bdbdbd" />
<rect x="871" y="81" width="1" height="115" fill="#bdbdbd" />
<rect x="1056" y="81" width="1" height="115" fill="#bdbdbd" />
<rect x="1298.5" y="81" width="1" height="115" fill="#bdbdbd" />
<rect x="1498" y="81" width="1" height="115" fill="#bdbdbd" />
<rect x="1699.5" y="81" width="1" height="115" fill="#bdbdbd" />
<rect x="392" y="86" width="70" height="86" fill="#c6c6c6" />
<rect x="1126" y="86" width="84" height="86" fill="#c6c6c6" />
<text x="427" y="146" font-size="15.5" fill="#555" font-weight="normal" font-style="normal" text-anchor="middle" textLength="61.5" lengthAdjust="spacingAndGlyphs" >Members</text>
<text x="486.5" y="146" font-size="15.5" fill="#555" font-weight="normal" font-style="normal" text-anchor="middle" textLength="38" lengthAdjust="spacingAndGlyphs" >Plates</text>
<text x="534.5" y="146" font-size="15.5" fill="#555" font-weight="normal" font-style="normal" text-anchor="middle" textLength="22" lengthAdjust="spacingAndGlyphs" >LCS</text>
<text x="596" y="146" font-size="15.5" fill="#555" font-weight="normal" font-style="normal" text-anchor="middle" textLength="30" lengthAdjust="spacingAndGlyphs" >New</text>
<text x="647" y="146" font-size="15.5" fill="#555" font-weight="normal" font-style="normal" text-anchor="middle" textLength="46" lengthAdjust="spacingAndGlyphs" >Gallery</text>
<text x="718" y="146" font-size="15.5" fill="#555" font-weight="normal" font-style="normal" text-anchor="middle" textLength="54" lengthAdjust="spacingAndGlyphs" >Propose</text>
<text x="776.5" y="146" font-size="15.5" fill="#555" font-weight="normal" font-style="normal" text-anchor="middle" textLength="47" lengthAdjust="spacingAndGlyphs" >Publish</text>
<text x="835" y="146" font-size="15.5" fill="#555" font-weight="normal" font-style="normal" text-anchor="middle" textLength="54" lengthAdjust="spacingAndGlyphs" >Manage</text>
<text x="903" y="146" font-size="15.5" fill="#555" font-weight="normal" font-style="normal" text-anchor="middle" textLength="34" lengthAdjust="spacingAndGlyphs" >Code</text>
<text x="903" y="162" font-size="15.5" fill="#555" font-weight="normal" font-style="normal" text-anchor="middle" textLength="35" lengthAdjust="spacingAndGlyphs" >setup</text>
<text x="961.5" y="146" font-size="15.5" fill="#555" font-weight="normal" font-style="normal" text-anchor="middle" textLength="61" lengthAdjust="spacingAndGlyphs" >Calculate</text>
<text x="1023" y="146" font-size="15.5" fill="#ababab" font-weight="normal" font-style="normal" text-anchor="middle" textLength="46" lengthAdjust="spacingAndGlyphs" >Overall</text>
<text x="1023" y="162" font-size="15.5" fill="#ababab" font-weight="normal" font-style="normal" text-anchor="middle" textLength="37" lengthAdjust="spacingAndGlyphs" >check</text>
<text x="1095" y="146" font-size="15.5" fill="#555" font-weight="normal" font-style="normal" text-anchor="middle" textLength="53" lengthAdjust="spacingAndGlyphs" >Settings</text>
<text x="1168" y="146" font-size="15.5" fill="#555" font-weight="normal" font-style="normal" text-anchor="middle" textLength="55" lengthAdjust="spacingAndGlyphs" >Loads in</text>
<text x="1168" y="162" font-size="15.5" fill="#555" font-weight="normal" font-style="normal" text-anchor="middle" textLength="75" lengthAdjust="spacingAndGlyphs" >equilibrium</text>
<text x="1253" y="146" font-size="15.5" fill="#555" font-weight="normal" font-style="normal" text-anchor="middle" textLength="48" lengthAdjust="spacingAndGlyphs" >Loads -</text>
<text x="1253" y="162" font-size="15.5" fill="#555" font-weight="normal" font-style="normal" text-anchor="middle" textLength="69" lengthAdjust="spacingAndGlyphs" >percentage</text>
<text x="1332.5" y="146" font-size="15.5" fill="#555" font-weight="normal" font-style="normal" text-anchor="middle" textLength="24" lengthAdjust="spacingAndGlyphs" >XLS</text>
<text x="1332.5" y="162" font-size="15.5" fill="#555" font-weight="normal" font-style="normal" text-anchor="middle" textLength="45" lengthAdjust="spacingAndGlyphs" >Import</text>
<text x="1400.5" y="146" font-size="15.5" fill="#555" font-weight="normal" font-style="normal" text-anchor="middle" textLength="75" lengthAdjust="spacingAndGlyphs" >Connection</text>
<text x="1400.5" y="162" font-size="15.5" fill="#555" font-weight="normal" font-style="normal" text-anchor="middle" textLength="45" lengthAdjust="spacingAndGlyphs" >Import</text>
<text x="1467.5" y="146" font-size="15.5" fill="#555" font-weight="normal" font-style="normal" text-anchor="middle" textLength="24" lengthAdjust="spacingAndGlyphs" >XLS</text>
<text x="1467.5" y="162" font-size="15.5" fill="#555" font-weight="normal" font-style="normal" text-anchor="middle" textLength="43" lengthAdjust="spacingAndGlyphs" >Export</text>
<text x="1539" y="146" font-size="15.5" fill="#555" font-weight="normal" font-style="normal" text-anchor="middle" textLength="56" lengthAdjust="spacingAndGlyphs" >Member</text>
<text x="1595.5" y="146" font-size="15.5" fill="#555" font-weight="normal" font-style="normal" text-anchor="middle" textLength="33" lengthAdjust="spacingAndGlyphs" >Load</text>
<text x="1656.5" y="146" font-size="15.5" fill="#555" font-weight="normal" font-style="normal" text-anchor="middle" textLength="67" lengthAdjust="spacingAndGlyphs" >Operation</text>
<text x="475.5" y="189" font-size="14.5" fill="#a8a8a8" font-weight="normal" font-style="normal" text-anchor="middle" textLength="41" lengthAdjust="spacingAndGlyphs" >Labels</text>
<text x="622.5" y="189" font-size="14.5" fill="#a8a8a8" font-weight="normal" font-style="normal" text-anchor="middle" textLength="51" lengthAdjust="spacingAndGlyphs" >Pictures</text>
<text x="776" y="189" font-size="14.5" fill="#a8a8a8" font-weight="normal" font-style="normal" text-anchor="middle" textLength="132" lengthAdjust="spacingAndGlyphs" >Connection Browser</text>
<text x="964" y="189" font-size="14.5" fill="#a8a8a8" font-weight="normal" font-style="normal" text-anchor="middle" textLength="48" lengthAdjust="spacingAndGlyphs" >CBFEM</text>
<text x="1179" y="189" font-size="14.5" fill="#a8a8a8" font-weight="normal" font-style="normal" text-anchor="middle" textLength="52" lengthAdjust="spacingAndGlyphs" >Options</text>
<text x="1399" y="189" font-size="14.5" fill="#a8a8a8" font-weight="normal" font-style="normal" text-anchor="middle" textLength="134" lengthAdjust="spacingAndGlyphs" >Import/Export loads</text>
<text x="1600" y="189" font-size="14.5" fill="#a8a8a8" font-weight="normal" font-style="normal" text-anchor="middle" textLength="30" lengthAdjust="spacingAndGlyphs" >New</text>
<defs><linearGradient id="bplus" x1="0" y1="0" x2="0" y2="1"><stop offset="0" stop-color="#8db6ea"/><stop offset="0.5" stop-color="#6b9ddf"/><stop offset="1" stop-color="#4e86d2"/></linearGradient></defs>
<path d="M216,93.3 L228,93.3 Q231.5,93.3 231.5,97 L231.5,124 Q231.5,127.5 228,127.5 L209,127.5 Q205.5,127.5 205.5,124 L205.5,104 Z" fill="none" stroke="#666666" stroke-width="3" stroke-linejoin="round"/>
<rect x="209.3" y="115.8" width="18.5" height="4.2" fill="#666666" />
<path d="M211.5,110 L218.5,116.5 L225.5,110" fill="none" stroke="#666666" stroke-width="2.6"/>
<rect x="203" y="106" width="10" height="6" fill="#ffffff" />
<path d="M204.35000000000002,90.3 h6.2 v6.050000000000001 h6.050000000000001 v6.2 h-6.050000000000001 v6.050000000000001 h-6.2 v-6.050000000000001 h-6.050000000000001 v-6.2 h6.050000000000001 Z" fill="#5f9ee8"/>
<path d="M263,92.8 L272.5,92.8 Q274.5,92.8 274.5,95 L274.5,103 M260.5,121 L255,121 Q253,121 253,119 L253,103.5 L263,92.8" fill="none" stroke="#666666" stroke-width="2.6" stroke-linejoin="round"/>
<polygon points="253,103.5 263,92.8 263,100 260,103.5" fill="#666666" />
<path d="M270.5,103.8 L277,103.8 Q279.2,103.8 279.2,106 L279.2,125 Q279.2,127.2 277,127.2 L264,127.2 Q261.7,127.2 261.7,125 L261.7,113 Z" fill="#fff" stroke="#666666" stroke-width="2.6" stroke-linejoin="round"/>
<polygon points="261.7,113 270.5,103.8 270.5,110 267.5,113" fill="#666666" />
<rect x="264.5" y="120" width="12.5" height="3.2" fill="#666666" />
<path d="M266,114 L270.8,118.5 L275.6,114" fill="none" stroke="#666666" stroke-width="2"/>
<path d="M329.5,106 C329.5,99 322,96.5 317,100.5" fill="none" stroke="#444" stroke-width="2.8"/>
<polygon points="313,97 313,106 322,106" fill="#111" />
<path d="M313.5,133.5 C313.5,127 321,124.5 326,128.5" fill="none" stroke="#b4b4b4" stroke-width="2.8"/>
<polygon points="330.7,125 330.7,134 321.7,134" fill="#a0a0a0" />
<path d="M313.2,148 L331,148 L331,165.5 L315,165.5 L313.2,163.7 Z" fill="none" stroke="#555" stroke-width="1.6"/>
<path d="M316.5,148 L316.5,156 L327.5,156 L327.5,148 M316.5,165.5 L316.5,159.5 L327.5,159.5 L327.5,165.5" fill="none" stroke="#555" stroke-width="1.4"/>
<rect x="318.5" y="161" width="2.5" height="4" fill="#999" />
<rect x="412.5" y="98.5" width="29.2" height="5.4" fill="#333" />
<rect x="412.5" y="116" width="29.2" height="5.4" fill="#333" />
<path d="M413.5,98 L413.5,108 L407,110 L413.5,112 L413.5,122 M440.7,98 L440.7,108 L447,110 L440.7,112 L440.7,122" fill="none" stroke="#333" stroke-width="1.3"/>
<rect x="412.5" y="100.3" width="29.2" height="1" fill="#666" />
<rect x="412.5" y="117.8" width="29.2" height="1" fill="#666" />
<rect x="475.8" y="94.3" width="20.6" height="31" fill="none" rx="1.5" stroke="#444" stroke-width="1.6"/>
<circle cx="480" cy="99.8" r="1.8" fill="none" stroke="#444" stroke-width="1.3"/>
<circle cx="492" cy="99.8" r="1.8" fill="none" stroke="#444" stroke-width="1.3"/>
<circle cx="480" cy="119.9" r="1.8" fill="none" stroke="#444" stroke-width="1.3"/>
<circle cx="492" cy="119.9" r="1.8" fill="none" stroke="#444" stroke-width="1.3"/>
<path d="M529.6,113.3 L529.6,96 M529.6,113.3 L547,113.3 M529.6,113.3 L518,125" stroke="#666666" stroke-width="2" fill="none"/>
<polygon points="525,97.5 529.6,91 534.2,97.5" fill="#666666" />
<polygon points="546,108.5 553.3,113.3 546,118" fill="#666666" />
<polygon points="514.2,129.3 516,120.5 522.5,127" fill="#666666" />
<rect x="581.2" y="90.8" width="33.0" height="32.2" fill="#efefef" stroke="#c3c7cf" stroke-width="1.3"/>
<rect x="576.5" y="96.8" width="32.5" height="32.500000000000014" fill="#efefef" stroke="#c3c7cf" stroke-width="1.3"/>
<path d="M579.6,121.7 L586.5,111 L590.3,113.3 L599.9,104.5 L606.4,121.7 Z" fill="none" stroke="#f08a4b" stroke-width="1.3"/>
<path d="M576,90.3 M582.6,90.3 h6.5 v6.5 h6.5 v6.5 h-6.5 v6.3 h-6.5 v-6.3 h-6.5 v-6.5 h6.5 Z" fill="url(#bplus)"/>
<rect x="632.2" y="90.8" width="33.0" height="32.2" fill="#efefef" stroke="#c3c7cf" stroke-width="1.3"/>
<rect x="627.8" y="96.8" width="32.200000000000045" height="32.500000000000014" fill="#efefef" stroke="#c3c7cf" stroke-width="1.3"/>
<path d="M630.3,121.7 L639,109 L641.5,113 L650.6,104.5 L657.5,121.7 Z" fill="none" stroke="#f08a4b" stroke-width="1.3"/>
<circle cx="634.5" cy="104" r="2.2" fill="none" stroke="#f08a4b" stroke-width="1.2"/>
<rect x="698.4" y="90.2" width="3.8" height="28.6" fill="#666666" />
<rect x="705.5" y="90.2" width="3.8" height="28.6" fill="#666666" />
<rect x="709" y="101.2" width="15" height="2" fill="#666666" />
<rect x="709" y="106.8" width="8" height="2" fill="#666666" />
<circle cx="723.8" cy="113.2" r="6.8" fill="#fff" stroke="#666666" stroke-width="3"/>
<path d="M727.5,118 L735,127" stroke="#666666" stroke-width="4.2"/>
<rect x="761.2" y="90.2" width="3.8" height="38.9" fill="#666666" />
<rect x="771.6" y="90.2" width="3.8" height="38.9" fill="#666666" />
<rect x="776.5" y="96" width="2.5" height="28" fill="#666666" />
<rect x="765" y="105" width="7" height="2" fill="#666666" />
<rect x="765" y="112.9" width="7" height="2" fill="#666666" />
<rect x="781" y="105" width="15.5" height="2" fill="#666666" />
<rect x="781" y="112.9" width="15.5" height="2" fill="#666666" />
<rect x="768" y="99" width="13" height="2" fill="#222" />
<rect x="768" y="119.8" width="13" height="2" fill="#222" />
<rect x="817" y="90.2" width="3.8" height="28.6" fill="#666666" />
<rect x="824" y="90.2" width="3.8" height="28.6" fill="#666666" />
<rect x="828" y="101.2" width="15" height="2" fill="#666666" />
<rect x="828" y="106.8" width="15" height="2" fill="#666666" />
<path d="M834.5,122 L849,107" stroke="#666666" stroke-width="7"/>
<path d="M850.5,105.2 L852.3,103.5 Q855,101 857.5,103.5 Q860,106 857.5,108.5 L855.7,110.3 Z" fill="#666666"/>
<polygon points="831,128.8 832.5,122.5 837,127" fill="#666666" />
<path d="M901.7,104.7 L920,123 L916,127 L897.7,108.7 A8.5,8.5 0 0 1 885.8,103.3 L892.8,103.3 L892.8,96.8 L886.6,96.8 A8.5,8.5 0 0 1 901.7,104.7 Z" fill="none" stroke="#666666" stroke-width="1.9" stroke-linejoin="round"/>
<path d="M946.3,91.6 L946.3,127.7 M975.8,91.6 L975.8,127.7 M946.3,96.8 L975.8,96.8 M946.3,108 L975.8,108 M946.3,119.3 L975.8,119.3" stroke="#111" stroke-width="1.6" fill="none"/>
<rect x="942.5" y="126" width="7.5" height="2.6" fill="#111" rx="1"/>
<rect x="972" y="126" width="7.5" height="2.6" fill="#111" rx="1"/>
<ellipse cx="954" cy="96.8" rx="1.9" ry="3" fill="#111"/>
<ellipse cx="961" cy="96.8" rx="1.9" ry="3" fill="#f26f23"/>
<ellipse cx="967.5" cy="96.8" rx="1.9" ry="3" fill="#111"/>
<ellipse cx="960" cy="108" rx="1.9" ry="3" fill="#111"/>
<ellipse cx="967" cy="108" rx="1.9" ry="3" fill="#f26f23"/>
<ellipse cx="956" cy="119.3" rx="1.9" ry="3" fill="#f26f23"/>
<ellipse cx="962.2" cy="119.3" rx="1.9" ry="3" fill="#111"/>
<ellipse cx="969" cy="119.3" rx="1.9" ry="3" fill="#f26f23"/>
<polygon points="1005.2,97.7 1012.9,91.4 1013.5,95.5 1019.5,97.5 1019.5,124.5 1008.5,125 1006.5,126 1005.2,126" fill="#e08c8c" />
<rect x="1008" y="96.5" width="2.5" height="28" fill="#a89494" />
<polygon points="1016.8,100.5 1023.5,95.3 1023.8,123.5 1017.2,130" fill="#ab9a8a" stroke="#f0b070" stroke-width="0.8"/>
<polygon points="1018.5,101.5 1038.8,104 1038.8,111 1041.8,111.5 1034.5,117.5 1018.5,112.5" fill="#b8d898" stroke="#a8f090" stroke-width="0.6"/>
<polygon points="1018,101.3 1023.8,96 1041.8,101.3 1034.8,106.7" fill="#c8c8c8" />
<polygon points="1109.73,106.72 1109.73,113.48 1104.64,114.59 1104.87,114.03 1107.69,118.4 1102.9,123.19 1098.53,120.37 1099.09,120.14 1097.98,125.23 1091.22,125.23 1090.11,120.14 1090.67,120.37 1086.3,123.19 1081.51,118.4 1084.33,114.03 1084.56,114.59 1079.47,113.48 1079.47,106.72 1084.56,105.61 1084.33,106.17 1081.51,101.8 1086.3,97.01 1090.67,99.83 1090.11,100.06 1091.22,94.97 1097.98,94.97 1099.09,100.06 1098.53,99.83 1102.9,97.01 1107.69,101.8 1104.87,106.17 1104.64,105.61" fill="none" stroke="#666666" stroke-width="3" stroke-linejoin="round"/>
<circle cx="1094.6" cy="110.1" r="5.3" fill="none" stroke="#666666" stroke-width="3"/>
<rect x="1166.6" y="92.3" width="3" height="34" fill="#666666" />
<rect x="1161" y="125" width="14" height="2.6" fill="#666666" />
<rect x="1155.4" y="97.4" width="25.2" height="2.6" fill="#666666" />
<path d="M1155.4,100 L1149.5,113 M1155.4,100 L1161.5,113 M1180.6,100 L1174.5,113 M1180.6,100 L1186.5,113" stroke="#666666" stroke-width="1.2" fill="none"/>
<path d="M1149,113 L1162,113 Q1155.5,118.5 1149,113 Z M1174,113 L1187,113 Q1180.5,118.5 1174,113 Z" fill="#666666" stroke="#666666" stroke-width="1.5"/>
<text x="1234.5" y="113" font-size="27" fill="#666666" font-weight="bold" font-style="normal" text-anchor="start" textLength="20.5" lengthAdjust="spacingAndGlyphs" >%</text>
<rect x="1260.8" y="93.4" width="4.6" height="26" fill="#666666" />
<polygon points="1256,118.5 1270,118.5 1263,126.8" fill="#666666" />
<polygon points="1313.4,95.4 1334.7,92.4 1334.7,127.1 1313.4,124.1" fill="#666666" />
<rect x="1334.7" y="96" width="15.8" height="27.6" fill="#666666" />
<rect x="1336.5" y="97.8" width="5" height="3.6" fill="#fff" />
<rect x="1343.3" y="97.8" width="5.5" height="3.6" fill="#fff" />
<rect x="1336.5" y="102.89999999999999" width="5" height="3.6" fill="#fff" />
<rect x="1343.3" y="102.89999999999999" width="5.5" height="3.6" fill="#fff" />
<rect x="1336.5" y="108.0" width="5" height="3.6" fill="#fff" />
<rect x="1343.3" y="108.0" width="5.5" height="3.6" fill="#fff" />
<rect x="1336.5" y="113.1" width="5" height="3.6" fill="#fff" />
<rect x="1343.3" y="113.1" width="5.5" height="3.6" fill="#fff" />
<rect x="1336.5" y="118.19999999999999" width="5" height="3.6" fill="#fff" />
<rect x="1343.3" y="118.19999999999999" width="5.5" height="3.6" fill="#fff" />
<text x="1324.3" y="117.5" font-size="17" fill="#fff" font-weight="normal" font-style="normal" text-anchor="middle" textLength="9.5" lengthAdjust="spacingAndGlyphs" >X</text>
<rect x="1383.7" y="111.7" width="34.6" height="7.9" fill="#666666" />
<path d="M1389,102.5 L1401,112.5 L1413,102.5" stroke="#666666" stroke-width="4.6" fill="none"/>
<polygon points="1447.5,95 1470.3,91.5 1470.3,128 1447.5,124.5" fill="#fff" stroke="#8a8a8a" stroke-width="1.3"/>
<rect x="1470.3" y="96" width="15.3" height="27.6" fill="#8a8a8a" />
<rect x="1472" y="97.8" width="5" height="3.6" fill="#fff" />
<rect x="1478.5" y="97.8" width="5.3" height="3.6" fill="#fff" />
<rect x="1472" y="102.89999999999999" width="5" height="3.6" fill="#fff" />
<rect x="1478.5" y="102.89999999999999" width="5.3" height="3.6" fill="#fff" />
<rect x="1472" y="108.0" width="5" height="3.6" fill="#fff" />
<rect x="1478.5" y="108.0" width="5.3" height="3.6" fill="#fff" />
<rect x="1472" y="113.1" width="5" height="3.6" fill="#fff" />
<rect x="1478.5" y="113.1" width="5.3" height="3.6" fill="#fff" />
<rect x="1472" y="118.19999999999999" width="5" height="3.6" fill="#fff" />
<rect x="1478.5" y="118.19999999999999" width="5.3" height="3.6" fill="#fff" />
<text x="1459" y="117.5" font-size="17" fill="#666" font-weight="normal" font-style="normal" text-anchor="middle" textLength="9.5" lengthAdjust="spacingAndGlyphs" >X</text>
<path d="M1525.9,90.1 h6 v7.0 h7.0 v6 h-7.0 v7.0 h-6 v-7.0 h-7.0 v-6 h7.0 Z" fill="url(#bplus)"/>
<path d="M1521,120.5 L1552.5,108.3 L1557.5,110 L1557.5,113.5 L1526,126.5 L1521,125.5 Z M1521,120.5 L1526,121.8 L1557.5,110 M1526,121.8 L1526,126.5" fill="#fff" stroke="#333" stroke-width="1.1" stroke-linejoin="round"/>
<path d="M1581.7,90.1 h6 v7.0 h7.0 v6 h-7.0 v7.0 h-6 v-7.0 h-7.0 v-6 h7.0 Z" fill="url(#bplus)"/>
<path d="M1586.9,110 L1586.9,123 M1583.1000000000001,119 L1586.9,123.4 L1590.7,119" stroke="#222" stroke-width="1.4" fill="none"/>
<path d="M1597,106.5 L1597,123 M1593.2,119 L1597,123.4 L1600.8,119" stroke="#222" stroke-width="1.4" fill="none"/>
<path d="M1606.9,106.5 L1606.9,123 M1603.1000000000001,119 L1606.9,123.4 L1610.7,119" stroke="#222" stroke-width="1.4" fill="none"/>
<path d="M1644.0,90.1 h6 v7.0 h7.0 v6 h-7.0 v7.0 h-6 v-7.0 h-7.0 v-6 h7.0 Z" fill="url(#bplus)"/>
<path d="M1647.3,118 L1676.5,91.5 M1660,125.3 L1676.5,110" stroke="#9a9a9a" stroke-width="3" fill="none"/>
<path d="M1647.3,118 L1676.5,91.5 M1660,125.3 L1676.5,110" stroke="#e0e0e0" stroke-width="1" fill="none"/>
<path d="M1647.3,118 L1647.3,125.3 L1660,125.3" stroke="#111" stroke-width="1.6" fill="none"/>
<path d="M24.8,217.2 L35.9,206.3 L47,217.2 M28.3,214.5 L28.3,226.8 L33.6,226.8 L33.6,220.8 L38.2,220.8 L38.2,226.8 L43.5,226.8 L43.5,214.5" fill="none" stroke="#ffffff" stroke-width="2.6" stroke-linejoin="miter"/>
<rect x="70.8" y="206" width="16" height="15" fill="none" stroke="#ffffff" stroke-width="1.3"/>
<circle cx="85.8" cy="219.6" r="5.3" fill="#9a9a9a" stroke="#ffffff" stroke-width="1.5"/>
<path d="M85.8,216.5 L85.8,220 L82.8,220 M89.6,223.5 L94.3,228" stroke="#ffffff" stroke-width="1.4" fill="none"/>
<circle cx="126" cy="215.6" r="8.4" fill="none" stroke="#ffffff" stroke-width="3"/>
<path d="M132,221.8 L138.6,228.4" stroke="#ffffff" stroke-width="3.2"/>
<path d="M173,208 L173,226 M164,216.9 L182,216.9" stroke="#ffffff" stroke-width="2.6"/>
<polygon points="167.5,210.5 173,204.2 178.5,210.5" fill="#ffffff" />
<polygon points="167.5,223.3 173,229.5 178.5,223.3" fill="#ffffff" />
<polygon points="166.7,211.5 160.3,216.9 166.7,222.3" fill="#ffffff" />
<polygon points="179.3,211.5 185.6,216.9 179.3,222.3" fill="#ffffff" />
<path d="M227.2,219 A8.5,8.5 0 1 1 222.5,209.8" fill="none" stroke="#ffffff" stroke-width="2.6"/>
<polygon points="228.8,207.3 228.8,216.8 219.8,216.8" fill="#ffffff" />
<path d="M251,206 L256.5,211.5 M273,206 L267.5,211.5 M251,227.5 L256.5,222 M273,227.5 L267.5,222" stroke="#ffffff" stroke-width="1.7"/>
<path d="M250,211 L250,205 L256,205 M268,205 L274,205 L274,211 M250,222.5 L250,228.5 L256,228.5 M268,228.5 L274,228.5 L274,222.5" stroke="#ffffff" stroke-width="1.9" fill="none"/>
<path d="M294.8,214.5 L314,210.8 L319.5,212.5 L319.5,218.5 L302,227.3 L294.8,223.5 Z" fill="#ffffff"/>
<path d="M302,227 L302,216.5 L294.8,214.5 M302,216.5 L319.5,212.5" stroke="#bbbbbb" stroke-width="0.9" fill="none"/>
<text x="1040" y="222" font-size="15" fill="#ffffff" font-weight="bold" font-style="normal" text-anchor="start" textLength="34" lengthAdjust="spacingAndGlyphs" >Solid</text>
<text x="1090" y="222" font-size="15" fill="#ffffff" font-weight="normal" font-style="normal" text-anchor="start" textLength="77" lengthAdjust="spacingAndGlyphs" >Transparent</text>
<text x="1189" y="222" font-size="15" fill="#ffffff" font-weight="normal" font-style="normal" text-anchor="start" textLength="70" lengthAdjust="spacingAndGlyphs" >Wireframe</text>
<rect x="1280" y="200" width="7" height="778" fill="#c8c8c8" />
<rect x="0" y="231" width="1280" height="747" fill="#ffffff" />
<defs><linearGradient id="cyl" x1="0" x2="1" y1="0" y2="0"><stop offset="0" stop-color="#d0a800"/><stop offset="0.45" stop-color="#b89400"/><stop offset="1" stop-color="#5a4800"/></linearGradient></defs>
<g stroke="#7aa7e6" stroke-width="1" stroke-dasharray="10,3,2,3" fill="none">
<path d="M86,444.5 L248,491.6"/><path d="M1031.5,718 L1194,764"/><path d="M640,958 L640,978"/>
</g>
<polygon points="598.5,242 767.5,288 767.5,891 682,868 598.5,846" fill="#b14f1a" />
<polygon points="763.5,291 767.5,288 767.5,891 763.5,893" fill="#5a2a0e" />
<path d="M767.5,288 L767.5,891" stroke="#f47a2c" stroke-width="1" fill="none"/>
<path d="M598.5,244 L767.5,290 M598.5,241.5 L767.5,287.5" stroke="#f07a3a" stroke-width="1.2" fill="none"/>
<path d="M682,868.5 L763.5,892" stroke="#d8602a" stroke-width="1" fill="none"/>
<path d="M598.5,242 L598.5,340" stroke="#f07a3a" stroke-width="1" fill="none"/>
<polygon points="600,340 683.5,268 683.5,362" fill="#56260c" />
<path d="M595.5,340.5 L683.8,266.5 M599.5,341.5 L683.8,270.5" stroke="#f07a3a" stroke-width="1.3" fill="none"/>
<polygon points="249.6,439 520,516.8 520,656 249.6,576.2" fill="#6d8bb0" />
<ellipse cx="489" cy="512.7" rx="13.0" ry="5.22" fill="#b89000"/>
<polygon points="477.5,503 477.5,511.2 483.0,517.0 483.0,508.8" fill="#c49c00" stroke="#f5d000" stroke-width="0.8" stroke-linejoin="round"/>
<polygon points="483.0,508.8 483.0,517.0 495.0,517.0 495.0,508.8" fill="#8a6f00" stroke="#f5d000" stroke-width="0.8" stroke-linejoin="round"/>
<polygon points="495.0,508.8 495.0,517.0 500.5,511.2 500.5,503" fill="#5e4b00" stroke="#f5d000" stroke-width="0.8" stroke-linejoin="round"/>
<polygon points="477.5,503 483.0,497.2 495.0,497.2 500.5,503 495.0,508.8 483.0,508.8" fill="#d6aa00" stroke="#f5d000" stroke-width="0.8" stroke-linejoin="round"/>
<ellipse cx="522" cy="520.7" rx="13.0" ry="5.22" fill="#b89000"/>
<polygon points="510.5,511 510.5,519.2 516.0,525.0 516.0,516.8" fill="#c49c00" stroke="#f5d000" stroke-width="0.8" stroke-linejoin="round"/>
<polygon points="516.0,516.8 516.0,525.0 528.0,525.0 528.0,516.8" fill="#8a6f00" stroke="#f5d000" stroke-width="0.8" stroke-linejoin="round"/>
<polygon points="528.0,516.8 528.0,525.0 533.5,519.2 533.5,511" fill="#5e4b00" stroke="#f5d000" stroke-width="0.8" stroke-linejoin="round"/>
<polygon points="510.5,511 516.0,505.2 528.0,505.2 533.5,511 528.0,516.8 516.0,516.8" fill="#d6aa00" stroke="#f5d000" stroke-width="0.8" stroke-linejoin="round"/>
<polygon points="276.3,378.2 520,447.5 520,509.5 224.4,423.8" fill="#7b9cc6" />
<polygon points="224.4,423.8 520,509.5 520,516.8 224.4,431.7" fill="#6e8cb3" />
<path d="M224.4,424.3 L520,510 M249.6,439.3 L520,517.2" stroke="#a9c8ee" stroke-width="1" fill="none"/>
<polygon points="249.2,576.2 520,654.2 520,683.6 224.1,597.7" fill="#7b9cc6" />
<polygon points="224.1,597.7 520,683.6 520,690.1 224.1,605.4" fill="#6e8cb3" />
<path d="M224.1,598.2 L520,684.1 M224.1,605.4 L520,690.6 M249.2,576.2 L249.2,439" stroke="#a9c8ee" stroke-width="1" fill="none"/>
<polygon points="505.7,433.3 520,437.5 520,503.5 448.2,482.2" fill="#283a6e" />
<polygon points="448.2,482.2 520,503.5 520,511.5 448.2,491.6" fill="#22336a" />
<path d="M448.2,483 L520,504.3" stroke="#3a4d88" stroke-width="1" fill="none"/>
<ellipse cx="489.2" cy="479.7" rx="13.0" ry="5.22" fill="#b89000"/>
<polygon points="477.7,470 477.7,478.2 483.2,484.0 483.2,475.8" fill="#c49c00" stroke="#f5d000" stroke-width="0.8" stroke-linejoin="round"/>
<polygon points="483.2,475.8 483.2,484.0 495.2,484.0 495.2,475.8" fill="#8a6f00" stroke="#f5d000" stroke-width="0.8" stroke-linejoin="round"/>
<polygon points="495.2,475.8 495.2,484.0 500.7,478.2 500.7,470" fill="#5e4b00" stroke="#f5d000" stroke-width="0.8" stroke-linejoin="round"/>
<polygon points="477.7,470 483.2,464.2 495.2,464.2 500.7,470 495.2,475.8 483.2,475.8" fill="#d6aa00" stroke="#f5d000" stroke-width="0.8" stroke-linejoin="round"/>
<ellipse cx="518" cy="453.7" rx="13.0" ry="5.22" fill="#b89000"/>
<polygon points="506.5,444 506.5,452.2 512.0,458.0 512.0,449.8" fill="#c49c00" stroke="#f5d000" stroke-width="0.8" stroke-linejoin="round"/>
<polygon points="512.0,449.8 512.0,458.0 524.0,458.0 524.0,449.8" fill="#8a6f00" stroke="#f5d000" stroke-width="0.8" stroke-linejoin="round"/>
<polygon points="524.0,449.8 524.0,458.0 529.5,452.2 529.5,444" fill="#5e4b00" stroke="#f5d000" stroke-width="0.8" stroke-linejoin="round"/>
<polygon points="506.5,444 512.0,438.2 524.0,438.2 529.5,444 524.0,449.8 512.0,449.8" fill="#d6aa00" stroke="#f5d000" stroke-width="0.8" stroke-linejoin="round"/>
<ellipse cx="521" cy="489.7" rx="13.0" ry="5.22" fill="#b89000"/>
<polygon points="509.5,480 509.5,488.2 515.0,494.0 515.0,485.8" fill="#c49c00" stroke="#f5d000" stroke-width="0.8" stroke-linejoin="round"/>
<polygon points="515.0,485.8 515.0,494.0 527.0,494.0 527.0,485.8" fill="#8a6f00" stroke="#f5d000" stroke-width="0.8" stroke-linejoin="round"/>
<polygon points="527.0,485.8 527.0,494.0 532.5,488.2 532.5,480" fill="#5e4b00" stroke="#f5d000" stroke-width="0.8" stroke-linejoin="round"/>
<polygon points="509.5,480 515.0,474.2 527.0,474.2 532.5,480 527.0,485.8 515.0,485.8" fill="#d6aa00" stroke="#f5d000" stroke-width="0.8" stroke-linejoin="round"/>
<polygon points="448.3,669.5 520,690.1 520,702 448.3,680.7" fill="#22336a" />
<ellipse cx="522" cy="671.0" rx="13" ry="4.5" fill="#a88a00"/>
<polygon points="508.6,655.5 515.5,661.0 515.5,673.0 508.6,667.5" fill="#c9a000" stroke="#ffd800" stroke-width="0.8" stroke-linejoin="round"/>
<polygon points="515.5,661.0 515.5,673.0 528.5,673.0 528.5,661.0" fill="#8c7000" stroke="#ffd800" stroke-width="0.8" stroke-linejoin="round"/>
<polygon points="528.5,661.0 528.5,673.0 535.4,667.5 535.4,655.5" fill="#5e4b00" stroke="#ffd800" stroke-width="0.8" stroke-linejoin="round"/>
<polygon points="508.6,655.5 515.5,650.0 528.5,650.0 535.4,655.5 528.5,661.0 515.5,661.0" fill="#d4aa00" stroke="#ffd800" stroke-width="0.8" stroke-linejoin="round"/>
<path d="M514.5,648.5 L514.5,657.0 A7.5,3 0 0 0 529.5,657.0 L529.5,648.5 Z" fill="url(#cyl)"/>
<ellipse cx="522" cy="648.5" rx="7.5" ry="3" fill="#d6ae00"/>
<ellipse cx="489.3" cy="661.5" rx="13" ry="4.5" fill="#a88a00"/>
<polygon points="475.90000000000003,646 482.8,651.5 482.8,663.5 475.90000000000003,658" fill="#c9a000" stroke="#ffd800" stroke-width="0.8" stroke-linejoin="round"/>
<polygon points="482.8,651.5 482.8,663.5 495.8,663.5 495.8,651.5" fill="#8c7000" stroke="#ffd800" stroke-width="0.8" stroke-linejoin="round"/>
<polygon points="495.8,651.5 495.8,663.5 502.7,658 502.7,646" fill="#5e4b00" stroke="#ffd800" stroke-width="0.8" stroke-linejoin="round"/>
<polygon points="475.90000000000003,646 482.8,640.5 495.8,640.5 502.7,646 495.8,651.5 482.8,651.5" fill="#d4aa00" stroke="#ffd800" stroke-width="0.8" stroke-linejoin="round"/>
<path d="M481.8,639 L481.8,647.5 A7.5,3 0 0 0 496.8,647.5 L496.8,639 Z" fill="url(#cyl)"/>
<ellipse cx="489.3" cy="639" rx="7.5" ry="3" fill="#d6ae00"/>
<polygon points="682,565.3 1003.4,656.6 1029,634.5 1029,804 698,703 682,700" fill="#6d8bb0" />
<polygon points="682,698 1029,802.2 1029,768.7 1055.3,776.6 1003.4,822.6 682,728.7" fill="#7b9cc6" />
<polygon points="682,728.7 1003.4,822.6 1003.4,830.3 682,737.5" fill="#7697c2" />
<polygon points="1055.3,776.6 1055.3,784.3 1003.4,830.3 1003.4,822.6" fill="#3d4c66" />
<path d="M682,729.2 L1003.4,823.1 M698,700.5 L1029,802.5 M1029,630 L1029,802.2" stroke="#a9c8ee" stroke-width="1" fill="none"/>
<polygon points="682,737.5 784,767 774,775 682,747.3" fill="#22336a" />
<polygon points="774,765 784,767 774,775" fill="#141d3a" />
<polygon points="682,559 698,563 698,700 682,697" fill="#283a6e" />
<polygon points="694,562 698,563 698,700 694,699" fill="#141d3a" />
<ellipse cx="693.4" cy="570.7" rx="13.0" ry="5.22" fill="#b89000"/>
<polygon points="681.9,561 681.9,569.2 687.4,575.0 687.4,566.8" fill="#c49c00" stroke="#f5d000" stroke-width="0.8" stroke-linejoin="round"/>
<polygon points="687.4,566.8 687.4,575.0 699.4,575.0 699.4,566.8" fill="#8a6f00" stroke="#f5d000" stroke-width="0.8" stroke-linejoin="round"/>
<polygon points="699.4,566.8 699.4,575.0 704.9,569.2 704.9,561" fill="#5e4b00" stroke="#f5d000" stroke-width="0.8" stroke-linejoin="round"/>
<polygon points="681.9,561 687.4,555.2 699.4,555.2 704.9,561 699.4,566.8 687.4,566.8" fill="#d6aa00" stroke="#f5d000" stroke-width="0.8" stroke-linejoin="round"/>
<ellipse cx="726.4" cy="579.7" rx="13.0" ry="5.22" fill="#b89000"/>
<polygon points="714.9,570 714.9,578.2 720.4,584.0 720.4,575.8" fill="#c49c00" stroke="#f5d000" stroke-width="0.8" stroke-linejoin="round"/>
<polygon points="720.4,575.8 720.4,584.0 732.4,584.0 732.4,575.8" fill="#8a6f00" stroke="#f5d000" stroke-width="0.8" stroke-linejoin="round"/>
<polygon points="732.4,575.8 732.4,584.0 737.9,578.2 737.9,570" fill="#5e4b00" stroke="#f5d000" stroke-width="0.8" stroke-linejoin="round"/>
<polygon points="714.9,570 720.4,564.2 732.4,564.2 737.9,570 732.4,575.8 720.4,575.8" fill="#d6aa00" stroke="#f5d000" stroke-width="0.8" stroke-linejoin="round"/>
<ellipse cx="759.4" cy="589.2" rx="13.0" ry="5.22" fill="#b89000"/>
<polygon points="747.9,579.5 747.9,587.7 753.4,593.5 753.4,585.3" fill="#c49c00" stroke="#f5d000" stroke-width="0.8" stroke-linejoin="round"/>
<polygon points="753.4,585.3 753.4,593.5 765.4,593.5 765.4,585.3" fill="#8a6f00" stroke="#f5d000" stroke-width="0.8" stroke-linejoin="round"/>
<polygon points="765.4,585.3 765.4,593.5 770.9,587.7 770.9,579.5" fill="#5e4b00" stroke="#f5d000" stroke-width="0.8" stroke-linejoin="round"/>
<polygon points="747.9,579.5 753.4,573.7 765.4,573.7 770.9,579.5 765.4,585.3 753.4,585.3" fill="#d6aa00" stroke="#f5d000" stroke-width="0.8" stroke-linejoin="round"/>
<polygon points="682,492.7 1055.3,604.3 1003.4,649 682,557.7" fill="#7b9cc6" />
<polygon points="682,557.7 1003.4,649 1003.4,656.6 682,565.3" fill="#7697c2" />
<polygon points="1055.3,604.3 1055.3,611.9 1003.4,656.6 1003.4,649" fill="#3d4c66" />
<path d="M682,558.2 L1003.4,649.5 M682,565.8 L1003.4,657" stroke="#a9c8ee" stroke-width="1" fill="none"/>
<polygon points="682,483.8 831.6,528.4 775.2,578.7 682,551.2" fill="#283a6e" />
<polygon points="682,551.2 775.2,578.7 775.2,584.8 682,559.4" fill="#22336a" />
<polygon points="831.6,528.4 831.6,537.4 775.2,584.8 775.2,578.7" fill="#141d3a" />
<path d="M682,552 L775.2,579.5" stroke="#3a4d88" stroke-width="1" fill="none"/>
<ellipse cx="692.7" cy="501.7" rx="13.0" ry="5.22" fill="#b89000"/>
<polygon points="681.2,492 681.2,500.2 686.7,506.0 686.7,497.8" fill="#c49c00" stroke="#f5d000" stroke-width="0.8" stroke-linejoin="round"/>
<polygon points="686.7,497.8 686.7,506.0 698.7,506.0 698.7,497.8" fill="#8a6f00" stroke="#f5d000" stroke-width="0.8" stroke-linejoin="round"/>
<polygon points="698.7,497.8 698.7,506.0 704.2,500.2 704.2,492" fill="#5e4b00" stroke="#f5d000" stroke-width="0.8" stroke-linejoin="round"/>
<polygon points="681.2,492 686.7,486.2 698.7,486.2 704.2,492 698.7,497.8 686.7,497.8" fill="#d6aa00" stroke="#f5d000" stroke-width="0.8" stroke-linejoin="round"/>
<ellipse cx="725" cy="511.2" rx="13.0" ry="5.22" fill="#b89000"/>
<polygon points="713.5,501.5 713.5,509.7 719.0,515.5 719.0,507.3" fill="#c49c00" stroke="#f5d000" stroke-width="0.8" stroke-linejoin="round"/>
<polygon points="719.0,507.3 719.0,515.5 731.0,515.5 731.0,507.3" fill="#8a6f00" stroke="#f5d000" stroke-width="0.8" stroke-linejoin="round"/>
<polygon points="731.0,507.3 731.0,515.5 736.5,509.7 736.5,501.5" fill="#5e4b00" stroke="#f5d000" stroke-width="0.8" stroke-linejoin="round"/>
<polygon points="713.5,501.5 719.0,495.7 731.0,495.7 736.5,501.5 731.0,507.3 719.0,507.3" fill="#d6aa00" stroke="#f5d000" stroke-width="0.8" stroke-linejoin="round"/>
<ellipse cx="758" cy="520.7" rx="13.0" ry="5.22" fill="#b89000"/>
<polygon points="746.5,511 746.5,519.2 752.0,525.0 752.0,516.8" fill="#c49c00" stroke="#f5d000" stroke-width="0.8" stroke-linejoin="round"/>
<polygon points="752.0,516.8 752.0,525.0 764.0,525.0 764.0,516.8" fill="#8a6f00" stroke="#f5d000" stroke-width="0.8" stroke-linejoin="round"/>
<polygon points="764.0,516.8 764.0,525.0 769.5,519.2 769.5,511" fill="#5e4b00" stroke="#f5d000" stroke-width="0.8" stroke-linejoin="round"/>
<polygon points="746.5,511 752.0,505.2 764.0,505.2 769.5,511 764.0,516.8 752.0,516.8" fill="#d6aa00" stroke="#f5d000" stroke-width="0.8" stroke-linejoin="round"/>
<ellipse cx="791" cy="530.2" rx="13.0" ry="5.22" fill="#b89000"/>
<polygon points="779.5,520.5 779.5,528.7 785.0,534.5 785.0,526.3" fill="#c49c00" stroke="#f5d000" stroke-width="0.8" stroke-linejoin="round"/>
<polygon points="785.0,526.3 785.0,534.5 797.0,534.5 797.0,526.3" fill="#8a6f00" stroke="#f5d000" stroke-width="0.8" stroke-linejoin="round"/>
<polygon points="797.0,526.3 797.0,534.5 802.5,528.7 802.5,520.5" fill="#5e4b00" stroke="#f5d000" stroke-width="0.8" stroke-linejoin="round"/>
<polygon points="779.5,520.5 785.0,514.7 797.0,514.7 802.5,520.5 797.0,526.3 785.0,526.3" fill="#d6aa00" stroke="#f5d000" stroke-width="0.8" stroke-linejoin="round"/>
<ellipse cx="696" cy="536.7" rx="13.0" ry="5.22" fill="#b89000"/>
<polygon points="684.5,527 684.5,535.2 690.0,541.0 690.0,532.8" fill="#c49c00" stroke="#f5d000" stroke-width="0.8" stroke-linejoin="round"/>
<polygon points="690.0,532.8 690.0,541.0 702.0,541.0 702.0,532.8" fill="#8a6f00" stroke="#f5d000" stroke-width="0.8" stroke-linejoin="round"/>
<polygon points="702.0,532.8 702.0,541.0 707.5,535.2 707.5,527" fill="#5e4b00" stroke="#f5d000" stroke-width="0.8" stroke-linejoin="round"/>
<polygon points="684.5,527 690.0,521.2 702.0,521.2 707.5,527 702.0,532.8 690.0,532.8" fill="#d6aa00" stroke="#f5d000" stroke-width="0.8" stroke-linejoin="round"/>
<ellipse cx="729" cy="545.7" rx="13.0" ry="5.22" fill="#b89000"/>
<polygon points="717.5,536 717.5,544.2 723.0,550.0 723.0,541.8" fill="#c49c00" stroke="#f5d000" stroke-width="0.8" stroke-linejoin="round"/>
<polygon points="723.0,541.8 723.0,550.0 735.0,550.0 735.0,541.8" fill="#8a6f00" stroke="#f5d000" stroke-width="0.8" stroke-linejoin="round"/>
<polygon points="735.0,541.8 735.0,550.0 740.5,544.2 740.5,536" fill="#5e4b00" stroke="#f5d000" stroke-width="0.8" stroke-linejoin="round"/>
<polygon points="717.5,536 723.0,530.2 735.0,530.2 740.5,536 735.0,541.8 723.0,541.8" fill="#d6aa00" stroke="#f5d000" stroke-width="0.8" stroke-linejoin="round"/>
<ellipse cx="762.2" cy="555.2" rx="13.0" ry="5.22" fill="#b89000"/>
<polygon points="750.7,545.5 750.7,553.7 756.2,559.5 756.2,551.3" fill="#c49c00" stroke="#f5d000" stroke-width="0.8" stroke-linejoin="round"/>
<polygon points="756.2,551.3 756.2,559.5 768.2,559.5 768.2,551.3" fill="#8a6f00" stroke="#f5d000" stroke-width="0.8" stroke-linejoin="round"/>
<polygon points="768.2,551.3 768.2,559.5 773.7,553.7 773.7,545.5" fill="#5e4b00" stroke="#f5d000" stroke-width="0.8" stroke-linejoin="round"/>
<polygon points="750.7,545.5 756.2,539.7 768.2,539.7 773.7,545.5 768.2,551.3 756.2,551.3" fill="#d6aa00" stroke="#f5d000" stroke-width="0.8" stroke-linejoin="round"/>
<ellipse cx="696.6" cy="721.5" rx="13" ry="4.5" fill="#a88a00"/>
<polygon points="683.2,706 690.1,711.5 690.1,723.5 683.2,718" fill="#c9a000" stroke="#ffd800" stroke-width="0.8" stroke-linejoin="round"/>
<polygon points="690.1,711.5 690.1,723.5 703.1,723.5 703.1,711.5" fill="#8c7000" stroke="#ffd800" stroke-width="0.8" stroke-linejoin="round"/>
<polygon points="703.1,711.5 703.1,723.5 710.0,718 710.0,706" fill="#5e4b00" stroke="#ffd800" stroke-width="0.8" stroke-linejoin="round"/>
<polygon points="683.2,706 690.1,700.5 703.1,700.5 710.0,706 703.1,711.5 690.1,711.5" fill="#d4aa00" stroke="#ffd800" stroke-width="0.8" stroke-linejoin="round"/>
<path d="M689.1,699 L689.1,707.5 A7.5,3 0 0 0 704.1,707.5 L704.1,699 Z" fill="url(#cyl)"/>
<ellipse cx="696.6" cy="699" rx="7.5" ry="3" fill="#d6ae00"/>
<ellipse cx="729.5" cy="730.8" rx="13" ry="4.5" fill="#a88a00"/>
<polygon points="716.1,715.3 723.0,720.8 723.0,732.8 716.1,727.3" fill="#c9a000" stroke="#ffd800" stroke-width="0.8" stroke-linejoin="round"/>
<polygon points="723.0,720.8 723.0,732.8 736.0,732.8 736.0,720.8" fill="#8c7000" stroke="#ffd800" stroke-width="0.8" stroke-linejoin="round"/>
<polygon points="736.0,720.8 736.0,732.8 742.9,727.3 742.9,715.3" fill="#5e4b00" stroke="#ffd800" stroke-width="0.8" stroke-linejoin="round"/>
<polygon points="716.1,715.3 723.0,709.8 736.0,709.8 742.9,715.3 736.0,720.8 723.0,720.8" fill="#d4aa00" stroke="#ffd800" stroke-width="0.8" stroke-linejoin="round"/>
<path d="M722.0,708.3 L722.0,716.8 A7.5,3 0 0 0 737.0,716.8 L737.0,708.3 Z" fill="url(#cyl)"/>
<ellipse cx="729.5" cy="708.3" rx="7.5" ry="3" fill="#d6ae00"/>
<ellipse cx="762.2" cy="740.5" rx="13" ry="4.5" fill="#a88a00"/>
<polygon points="748.8000000000001,725 755.7,730.5 755.7,742.5 748.8000000000001,737" fill="#c9a000" stroke="#ffd800" stroke-width="0.8" stroke-linejoin="round"/>
<polygon points="755.7,730.5 755.7,742.5 768.7,742.5 768.7,730.5" fill="#8c7000" stroke="#ffd800" stroke-width="0.8" stroke-linejoin="round"/>
<polygon points="768.7,730.5 768.7,742.5 775.6,737 775.6,725" fill="#5e4b00" stroke="#ffd800" stroke-width="0.8" stroke-linejoin="round"/>
<polygon points="748.8000000000001,725 755.7,719.5 768.7,719.5 775.6,725 768.7,730.5 755.7,730.5" fill="#d4aa00" stroke="#ffd800" stroke-width="0.8" stroke-linejoin="round"/>
<path d="M754.7,718 L754.7,726.5 A7.5,3 0 0 0 769.7,726.5 L769.7,718 Z" fill="url(#cyl)"/>
<ellipse cx="762.2" cy="718" rx="7.5" ry="3" fill="#d6ae00"/>
<polygon points="512.5,316 682,362.6 682,965 677.6,967.6 512.3,920.4" fill="#b14f1a" />
<polygon points="677.6,364 682,362.6 682,965 677.6,967.6" fill="#5a2a0e" />
<path d="M512.5,318 L678,363.5 M512.5,315 L682,361.5" stroke="#f07a3a" stroke-width="1.2" fill="none"/>
<path d="M512.8,316 L512.8,920 M512.3,920.4 L677.6,967.6" stroke="#f07a3a" stroke-width="1" fill="none"/>
<path d="M682.5,362 L682.5,870 M677.5,364 L677.5,967" stroke="#f47a2c" stroke-width="1" fill="none"/>
<defs><linearGradient id="gl1" x1="0" y1="0" x2="0.3" y2="1"><stop offset="0" stop-color="#6fd400"/><stop offset="0.35" stop-color="#3f8a00"/><stop offset="0.6" stop-color="#2a5e00"/><stop offset="1" stop-color="#67b828"/></linearGradient>
<linearGradient id="gr1" x1="0" y1="0" x2="1" y2="1"><stop offset="0" stop-color="#6fd400"/><stop offset="0.4" stop-color="#3c8400"/><stop offset="0.7" stop-color="#2a5a00"/><stop offset="1" stop-color="#6ec030"/></linearGradient></defs>
<g stroke="#86ff2c" stroke-width="1.1" stroke-linejoin="round">
<path d="M216.5,446 C205,447 191,456 184.5,468 C180,481 186,496 199.6,506 L191.3,511.4 L215.4,514 L215.4,506 L204.4,501.8 C193,491 189.5,478 193,467 C197,459 206,455.5 216.5,455 Z" fill="url(#gl1)"/>
<path d="M216.8,444 L227,436.5 L227,500 L230.5,496.3 L221.6,526 L212.6,512.8 L216.8,511 Z" fill="#2c5a00"/>
</g>
<g stroke="#86ff2c" stroke-width="1.1" stroke-linejoin="round">
<path d="M1052.6,686.1 L1063.6,677.8 L1063.6,744.6 L1068.7,738.4 L1058.4,768 L1048.8,755.6 L1052.6,754.2 Z" fill="#2c5a00"/>
<path d="M1056.3,699.2 L1064.6,692.3 C1080,694 1094,710 1095.5,728 C1096,738 1092,746 1080.4,752 L1068,763.8 L1060.5,758.3 L1075,748 C1084,742 1088,735 1087.3,728 C1086,716 1076,704 1063.9,702 Z" fill="url(#gr1)"/>
</g>
<rect x="221" y="406.5" width="37.69999999999999" height="17.899999999999977" fill="#c6c6c6" fill-opacity="0.88"/>
<text x="239.85" y="420.4" font-size="14" fill="#111" font-weight="normal" font-style="normal" text-anchor="middle" textLength="34" lengthAdjust="spacingAndGlyphs" >-40.0</text>
<rect x="201.3" y="484.4" width="32.39999999999998" height="18.100000000000023" fill="#c6c6c6" fill-opacity="0.88"/>
<text x="217.5" y="498.5" font-size="14" fill="#111" font-weight="normal" font-style="normal" text-anchor="middle" textLength="27" lengthAdjust="spacingAndGlyphs" >45.0</text>
<rect x="1057.8" y="647" width="38.100000000000136" height="18.5" fill="#c6c6c6" fill-opacity="0.88"/>
<text x="1076.85" y="661.5" font-size="14" fill="#111" font-weight="normal" font-style="normal" text-anchor="middle" textLength="34" lengthAdjust="spacingAndGlyphs" >-40.0</text>
<rect x="1078.2" y="737" width="32.799999999999955" height="18.700000000000045" fill="#c6c6c6" fill-opacity="0.88"/>
<text x="1094.6" y="751.7" font-size="14" fill="#111" font-weight="normal" font-style="normal" text-anchor="middle" textLength="27" lengthAdjust="spacingAndGlyphs" >45.0</text>
<rect x="392" y="540.8" width="25.80000000000001" height="23.0" fill="#ffffff" />
<text x="404.9" y="559.8" font-size="16" fill="#111" font-weight="normal" font-style="normal" text-anchor="middle" textLength="20" lengthAdjust="spacingAndGlyphs" >B1</text>
<rect x="834.9" y="668.8" width="16.100000000000023" height="23.200000000000045" fill="#ffffff" />
<text x="842.95" y="688" font-size="16" fill="#111" font-weight="normal" font-style="normal" text-anchor="middle" textLength="11" lengthAdjust="spacingAndGlyphs" >B</text>
<rect x="721.9" y="765" width="16.300000000000068" height="22.600000000000023" fill="#ffffff" />
<text x="730.05" y="783.6" font-size="16" fill="#111" font-weight="normal" font-style="normal" text-anchor="middle" textLength="12" lengthAdjust="spacingAndGlyphs" >C</text>
<text x="960" y="272.3" font-size="15.5" fill="#f26f23" font-weight="bold" font-style="normal" text-anchor="start" textLength="110.5" lengthAdjust="spacingAndGlyphs" >Production cost</text>
<text x="1080" y="272.3" font-size="15.5" fill="#222" font-weight="normal" font-style="normal" text-anchor="start" textLength="5" lengthAdjust="spacingAndGlyphs" >-</text>
<text x="1089.6" y="272.3" font-size="15.5" fill="#111" font-weight="bold" font-style="normal" text-anchor="start" textLength="27.7" lengthAdjust="spacingAndGlyphs" >69 €</text>
<ellipse cx="1205" cy="331" rx="47" ry="23" fill="none" stroke="#dcdcdc" stroke-width="10"/>
<g stroke="#8c8c8c" stroke-width="1" stroke-linejoin="round" fill-opacity="0.93">
<polygon points="1168.1,288.2 1196.9,272.3 1237.5,280.7 1215.5,300" fill="#b9b9b9" />
<polygon points="1168.1,288.2 1215.5,300 1213.8,345.7 1173.2,323.7" fill="#adadad" />
<polygon points="1215.5,300 1237.5,280.7 1234.1,328.8 1213.8,345.7" fill="#b5b5b5" />
</g>
<path d="M1196.9,272.3 L1196.9,308.5 L1173.2,323.7 M1196.9,308.5 L1234.1,328.8" stroke="#9a9a9a" stroke-width="0.9" fill="none"/>
<path d="M1170,359 L1186,347 M1176,362 L1181,350 L1195,349" stroke="#9c9c9c" stroke-width="3" fill="none" stroke-linecap="round"/>
<path d="M1243,339 L1260,347 M1255,343.5 L1260.5,347 L1254.5,349" stroke="#9a9a9a" stroke-width="1" fill="none"/>
<path d="M1158,310.5 L1170,308 M1166,304.5 L1166,312" stroke="#8a8a8a" stroke-width="1.4" fill="none"/>
<text x="1191" y="322" font-size="8" fill="#ffffff" font-weight="normal" font-style="normal" text-anchor="start" textLength="10" lengthAdjust="spacingAndGlyphs" >+Y</text>
<path d="M1203,285.5 L1209,284 M1206,282 L1207,286" stroke="#fff" stroke-width="1" fill="none"/>
<path d="M1227,306 Q1224.5,310 1227,313" stroke="#fff" stroke-width="1" fill="none"/>
<polygon points="1142.3,391.8 1142.3,398.8 1135.3,398.8" fill="#444" />
<text x="1162.9" y="401.4" font-size="15.5" fill="#333" font-weight="bold" font-style="normal" text-anchor="start" textLength="70.8" lengthAdjust="spacingAndGlyphs" >Members</text>
<rect x="1162.5" y="416.3" width="14" height="13.5" fill="#e4e4e4" rx="1.5"/>
<path d="M1164.5,423.3 L1168.0,427.3 L1177.0,414.8" stroke="#ff8a00" stroke-width="2.6" fill="none" stroke-linecap="round" stroke-linejoin="round"/>
<text x="1196.6" y="429.3" font-size="15.5" fill="#333" font-weight="normal" font-style="normal" text-anchor="start" textLength="10.5" lengthAdjust="spacingAndGlyphs" >C</text>
<rect x="1162.5" y="444.3" width="14" height="13.5" fill="#e4e4e4" rx="1.5"/>
<path d="M1164.5,451.3 L1168.0,455.3 L1177.0,442.8" stroke="#ff8a00" stroke-width="2.6" fill="none" stroke-linecap="round" stroke-linejoin="round"/>
<text x="1196.6" y="457.3" font-size="15.5" fill="#333" font-weight="normal" font-style="normal" text-anchor="start" textLength="10" lengthAdjust="spacingAndGlyphs" >B</text>
<rect x="1162.5" y="472.3" width="14" height="13.5" fill="#e4e4e4" rx="1.5"/>
<path d="M1164.5,479.3 L1168.0,483.3 L1177.0,470.8" stroke="#ff8a00" stroke-width="2.6" fill="none" stroke-linecap="round" stroke-linejoin="round"/>
<text x="1196.6" y="485.3" font-size="15.5" fill="#333" font-weight="normal" font-style="normal" text-anchor="start" textLength="15.5" lengthAdjust="spacingAndGlyphs" >B1</text>
<line x1="1196" y1="433" x2="1207" y2="433" stroke="#333" stroke-width="1" />
<polygon points="1142.3,503 1142.3,510 1135.3,510" fill="#444" />
<text x="1162.9" y="512.4" font-size="15.5" fill="#333" font-weight="bold" font-style="normal" text-anchor="start" textLength="92" lengthAdjust="spacingAndGlyphs" >Load effects</text>
<polygon points="1150,521 1242,521 1261,534.5 1242,548 1150,548" fill="#f26f23" />
<rect x="1162.5" y="528" width="13.5" height="13" fill="#e4e4e4" rx="2"/>
<path d="M1165,535 L1169,539.5 L1178.5,526.5" stroke="#ff8a00" stroke-width="2.6" fill="none" stroke-linecap="round" stroke-linejoin="round"/>
<text x="1196.6" y="540.4" font-size="15.5" fill="#ffffff" font-weight="bold" font-style="normal" text-anchor="start" textLength="22.2" lengthAdjust="spacingAndGlyphs" >LE1</text>
<polygon points="1142.3,559 1142.3,566 1135.3,566" fill="#444" />
<text x="1162.9" y="568.3" font-size="15.5" fill="#333" font-weight="bold" font-style="normal" text-anchor="start" textLength="83.4" lengthAdjust="spacingAndGlyphs" >Operations</text>
<rect x="1162.5" y="583.6" width="14" height="13.5" fill="#e4e4e4" rx="1.5"/>
<path d="M1164.5,590.6 L1168.0,594.6 L1177.0,582.1" stroke="#ff8a00" stroke-width="2.6" fill="none" stroke-linecap="round" stroke-linejoin="round"/>
<text x="1196.6" y="596.6" font-size="15.5" fill="#333" font-weight="normal" font-style="normal" text-anchor="start" textLength="24" lengthAdjust="spacingAndGlyphs" >FP1</text>
<rect x="1162.5" y="611.6" width="14" height="13.5" fill="#e4e4e4" rx="1.5"/>
<path d="M1164.5,618.6 L1168.0,622.6 L1177.0,610.1" stroke="#ff8a00" stroke-width="2.6" fill="none" stroke-linecap="round" stroke-linejoin="round"/>
<text x="1196.6" y="624.6" font-size="15.5" fill="#333" font-weight="normal" font-style="normal" text-anchor="start" textLength="24" lengthAdjust="spacingAndGlyphs" >FP2</text>
<rect x="1162.5" y="639.6" width="14" height="13.5" fill="#e4e4e4" rx="1.5"/>
<path d="M1164.5,646.6 L1168.0,650.6 L1177.0,638.1" stroke="#ff8a00" stroke-width="2.6" fill="none" stroke-linecap="round" stroke-linejoin="round"/>
<text x="1196.6" y="652.6" font-size="15.5" fill="#333" font-weight="normal" font-style="normal" text-anchor="start" textLength="24" lengthAdjust="spacingAndGlyphs" >FP3</text>
<rect x="1162.5" y="667.6" width="14" height="13.5" fill="#e4e4e4" rx="1.5"/>
<path d="M1164.5,674.6 L1168.0,678.6 L1177.0,666.1" stroke="#ff8a00" stroke-width="2.6" fill="none" stroke-linecap="round" stroke-linejoin="round"/>
<text x="1196.6" y="680.6" font-size="15.5" fill="#333" font-weight="normal" font-style="normal" text-anchor="start" textLength="24" lengthAdjust="spacingAndGlyphs" >FP4</text>
<rect x="1162.5" y="695.6" width="14" height="13.5" fill="#e4e4e4" rx="1.5"/>
<path d="M1164.5,702.6 L1168.0,706.6 L1177.0,694.1" stroke="#ff8a00" stroke-width="2.6" fill="none" stroke-linecap="round" stroke-linejoin="round"/>
<text x="1196.6" y="708.6" font-size="15.5" fill="#333" font-weight="normal" font-style="normal" text-anchor="start" textLength="24" lengthAdjust="spacingAndGlyphs" >FP5</text>
<rect x="1162.5" y="723.6" width="14" height="13.5" fill="#e4e4e4" rx="1.5"/>
<path d="M1164.5,730.6 L1168.0,734.6 L1177.0,722.1" stroke="#ff8a00" stroke-width="2.6" fill="none" stroke-linecap="round" stroke-linejoin="round"/>
<text x="1196.6" y="736.6" font-size="15.5" fill="#333" font-weight="normal" font-style="normal" text-anchor="start" textLength="24" lengthAdjust="spacingAndGlyphs" >FP6</text>
<rect x="1287" y="200" width="633" height="31" fill="#f26f23" />
<rect x="1287" y="231" width="633" height="747" fill="#ffffff" />
<text x="1300" y="222" font-size="15" fill="#ffffff" font-weight="bold" font-style="normal" text-anchor="start" textLength="22.5" lengthAdjust="spacingAndGlyphs" >LE1</text>
<text x="1338" y="222" font-size="15" fill="#ffffff" font-weight="normal" font-style="normal" text-anchor="start" textLength="49" lengthAdjust="spacingAndGlyphs" >[ Load ]</text>
<text x="1814" y="222" font-size="15" fill="#ffffff" font-weight="bold" font-style="normal" text-anchor="start" textLength="34" lengthAdjust="spacingAndGlyphs" >Copy</text>
<text x="1862" y="222" font-size="15" fill="#ffffff" font-weight="bold" font-style="normal" text-anchor="start" textLength="44" lengthAdjust="spacingAndGlyphs" >Delete</text>
<rect x="0" y="978" width="1920" height="1" fill="#9a9a9a" />
<g>
<rect x="0" y="979" width="1920" height="39" fill="#101010" />
<linearGradient id="st0" x1="0" x2="1" y1="0" y2="0"><stop offset="0.00" stop-color="rgb(17,17,17)"/><stop offset="0.17" stop-color="rgb(7,7,7)"/><stop offset="0.33" stop-color="rgb(16,16,16)"/><stop offset="0.50" stop-color="rgb(12,12,12)"/><stop offset="0.67" stop-color="rgb(21,21,21)"/><stop offset="0.83" stop-color="rgb(19,19,19)"/><stop offset="1.00" stop-color="rgb(7,7,7)"/></linearGradient>
<rect x="0" y="979" width="1920" height="1" fill="url(#st0)"/>
<linearGradient id="st1" x1="0" x2="1" y1="0" y2="0"><stop offset="0.00" stop-color="rgb(18,18,18)"/><stop offset="0.17" stop-color="rgb(7,7,7)"/><stop offset="0.33" stop-color="rgb(16,16,16)"/><stop offset="0.50" stop-color="rgb(20,20,20)"/><stop offset="0.67" stop-color="rgb(14,14,14)"/><stop offset="0.83" stop-color="rgb(11,11,11)"/><stop offset="1.00" stop-color="rgb(16,16,16)"/></linearGradient>
<rect x="0" y="980" width="1920" height="1" fill="url(#st1)"/>
<linearGradient id="st2" x1="0" x2="1" y1="0" y2="0"><stop offset="0.00" stop-color="rgb(5,5,5)"/><stop offset="0.17" stop-color="rgb(6,6,6)"/><stop offset="0.33" stop-color="rgb(10,10,10)"/><stop offset="0.50" stop-color="rgb(27,27,27)"/><stop offset="0.67" stop-color="rgb(37,37,37)"/><stop offset="0.83" stop-color="rgb(7,7,7)"/><stop offset="1.00" stop-color="rgb(13,13,13)"/></linearGradient>
<rect x="0" y="981" width="1920" height="1" fill="url(#st2)"/>
<linearGradient id="st3" x1="0" x2="1" y1="0" y2="0"><stop offset="0.00" stop-color="rgb(4,4,4)"/><stop offset="0.17" stop-color="rgb(6,6,6)"/><stop offset="0.33" stop-color="rgb(32,32,32)"/><stop offset="0.50" stop-color="rgb(4,4,4)"/><stop offset="0.67" stop-color="rgb(4,4,4)"/><stop offset="0.83" stop-color="rgb(43,43,43)"/><stop offset="1.00" stop-color="rgb(4,4,4)"/></linearGradient>
<rect x="0" y="982" width="1920" height="1" fill="url(#st3)"/>
<linearGradient id="st4" x1="0" x2="1" y1="0" y2="0"><stop offset="0.00" stop-color="rgb(22,22,22)"/><stop offset="0.17" stop-color="rgb(56,56,56)"/><stop offset="0.33" stop-color="rgb(19,19,19)"/><stop offset="0.50" stop-color="rgb(29,29,29)"/><stop offset="0.67" stop-color="rgb(31,31,31)"/><stop offset="0.83" stop-color="rgb(31,31,31)"/><stop offset="1.00" stop-color="rgb(31,31,31)"/></linearGradient>
<rect x="0" y="983" width="1920" height="1" fill="url(#st4)"/>
<linearGradient id="st5" x1="0" x2="1" y1="0" y2="0"><stop offset="0.00" stop-color="rgb(12,12,12)"/><stop offset="0.17" stop-color="rgb(25,25,25)"/><stop offset="0.33" stop-color="rgb(21,21,21)"/><stop offset="0.50" stop-color="rgb(30,30,30)"/><stop offset="0.67" stop-color="rgb(18,18,18)"/><stop offset="0.83" stop-color="rgb(17,17,17)"/><stop offset="1.00" stop-color="rgb(23,23,23)"/></linearGradient>
<rect x="0" y="984" width="1920" height="1" fill="url(#st5)"/>
<linearGradient id="st6" x1="0" x2="1" y1="0" y2="0"><stop offset="0.00" stop-color="rgb(14,14,14)"/><stop offset="0.17" stop-color="rgb(12,12,12)"/><stop offset="0.33" stop-color="rgb(18,18,18)"/><stop offset="0.50" stop-color="rgb(25,25,25)"/><stop offset="0.67" stop-color="rgb(17,17,17)"/><stop offset="0.83" stop-color="rgb(16,16,16)"/><stop offset="1.00" stop-color="rgb(17,17,17)"/></linearGradient>
<rect x="0" y="985" width="1920" height="1" fill="url(#st6)"/>
<linearGradient id="st7" x1="0" x2="1" y1="0" y2="0"><stop offset="0.00" stop-color="rgb(29,29,29)"/><stop offset="0.17" stop-color="rgb(35,35,35)"/><stop offset="0.33" stop-color="rgb(34,34,34)"/><stop offset="0.50" stop-color="rgb(25,25,25)"/><stop offset="0.67" stop-color="rgb(23,23,23)"/><stop offset="0.83" stop-color="rgb(21,21,21)"/><stop offset="1.00" stop-color="rgb(31,31,31)"/></linearGradient>
<rect x="0" y="986" width="1920" height="1" fill="url(#st7)"/>
<linearGradient id="st8" x1="0" x2="1" y1="0" y2="0"><stop offset="0.00" stop-color="rgb(20,20,20)"/><stop offset="0.17" stop-color="rgb(34,34,34)"/><stop offset="0.33" stop-color="rgb(9,9,9)"/><stop offset="0.50" stop-color="rgb(20,20,20)"/><stop offset="0.67" stop-color="rgb(10,10,10)"/><stop offset="0.83" stop-color="rgb(22,22,22)"/><stop offset="1.00" stop-color="rgb(11,11,11)"/></linearGradient>
<rect x="0" y="987" width="1920" height="1" fill="url(#st8)"/>
<linearGradient id="st9" x1="0" x2="1" y1="0" y2="0"><stop offset="0.00" stop-color="rgb(23,23,23)"/><stop offset="0.17" stop-color="rgb(20,20,20)"/><stop offset="0.33" stop-color="rgb(29,29,29)"/><stop offset="0.50" stop-color="rgb(40,40,40)"/><stop offset="0.67" stop-color="rgb(58,58,58)"/><stop offset="0.83" stop-color="rgb(38,38,38)"/><stop offset="1.00" stop-color="rgb(35,35,35)"/></linearGradient>
<rect x="0" y="988" width="1920" height="1" fill="url(#st9)"/>
<linearGradient id="st10" x1="0" x2="1" y1="0" y2="0"><stop offset="0.00" stop-color="rgb(23,23,23)"/><stop offset="0.17" stop-color="rgb(46,46,46)"/><stop offset="0.33" stop-color="rgb(28,28,28)"/><stop offset="0.50" stop-color="rgb(25,25,25)"/><stop offset="0.67" stop-color="rgb(38,38,38)"/><stop offset="0.83" stop-color="rgb(16,16,16)"/><stop offset="1.00" stop-color="rgb(10,10,10)"/></linearGradient>
<rect x="0" y="989" width="1920" height="1" fill="url(#st10)"/>
<linearGradient id="st11" x1="0" x2="1" y1="0" y2="0"><stop offset="0.00" stop-color="rgb(12,12,12)"/><stop offset="0.17" stop-color="rgb(14,14,14)"/><stop offset="0.33" stop-color="rgb(28,28,28)"/><stop offset="0.50" stop-color="rgb(11,11,11)"/><stop offset="0.67" stop-color="rgb(12,12,12)"/><stop offset="0.83" stop-color="rgb(25,25,25)"/><stop offset="1.00" stop-color="rgb(11,11,11)"/></linearGradient>
<rect x="0" y="990" width="1920" height="1" fill="url(#st11)"/>
<linearGradient id="st12" x1="0" x2="1" y1="0" y2="0"><stop offset="0.00" stop-color="rgb(8,8,8)"/><stop offset="0.17" stop-color="rgb(10,10,10)"/><stop offset="0.33" stop-color="rgb(13,13,13)"/><stop offset="0.50" stop-color="rgb(9,9,9)"/><stop offset="0.67" stop-color="rgb(22,22,22)"/><stop offset="0.83" stop-color="rgb(12,12,12)"/><stop offset="1.00" stop-color="rgb(19,19,19)"/></linearGradient>
<rect x="0" y="991" width="1920" height="1" fill="url(#st12)"/>
<linearGradient id="st13" x1="0" x2="1" y1="0" y2="0"><stop offset="0.00" stop-color="rgb(35,35,35)"/><stop offset="0.17" stop-color="rgb(28,28,28)"/><stop offset="0.33" stop-color="rgb(30,30,30)"/><stop offset="0.50" stop-color="rgb(30,30,30)"/><stop offset="0.67" stop-color="rgb(24,24,24)"/><stop offset="0.83" stop-color="rgb(38,38,38)"/><stop offset="1.00" stop-color="rgb(32,32,32)"/></linearGradient>
<rect x="0" y="992" width="1920" height="1" fill="url(#st13)"/>
<linearGradient id="st14" x1="0" x2="1" y1="0" y2="0"><stop offset="0.00" stop-color="rgb(28,28,28)"/><stop offset="0.17" stop-color="rgb(24,24,24)"/><stop offset="0.33" stop-color="rgb(19,19,19)"/><stop offset="0.50" stop-color="rgb(23,23,23)"/><stop offset="0.67" stop-color="rgb(18,18,18)"/><stop offset="0.83" stop-color="rgb(29,29,29)"/><stop offset="1.00" stop-color="rgb(31,31,31)"/></linearGradient>
<rect x="0" y="993" width="1920" height="1" fill="url(#st14)"/>
<linearGradient id="st15" x1="0" x2="1" y1="0" y2="0"><stop offset="0.00" stop-color="rgb(20,20,20)"/><stop offset="0.17" stop-color="rgb(25,25,25)"/><stop offset="0.33" stop-color="rgb(21,21,21)"/><stop offset="0.50" stop-color="rgb(25,25,25)"/><stop offset="0.67" stop-color="rgb(30,30,30)"/><stop offset="0.83" stop-color="rgb(20,20,20)"/><stop offset="1.00" stop-color="rgb(21,21,21)"/></linearGradient>
<rect x="0" y="994" width="1920" height="1" fill="url(#st15)"/>
<linearGradient id="st16" x1="0" x2="1" y1="0" y2="0"><stop offset="0.00" stop-color="rgb(32,32,32)"/><stop offset="0.17" stop-color="rgb(23,23,23)"/><stop offset="0.33" stop-color="rgb(22,22,22)"/><stop offset="0.50" stop-color="rgb(28,28,28)"/><stop offset="0.67" stop-color="rgb(29,29,29)"/><stop offset="0.83" stop-color="rgb(49,49,49)"/><stop offset="1.00" stop-color="rgb(28,28,28)"/></linearGradient>
<rect x="0" y="995" width="1920" height="1" fill="url(#st16)"/>
<linearGradient id="st17" x1="0" x2="1" y1="0" y2="0"><stop offset="0.00" stop-color="rgb(52,52,52)"/><stop offset="0.17" stop-color="rgb(21,21,21)"/><stop offset="0.33" stop-color="rgb(37,37,37)"/><stop offset="0.50" stop-color="rgb(39,39,39)"/><stop offset="0.67" stop-color="rgb(27,27,27)"/><stop offset="0.83" stop-color="rgb(58,58,58)"/><stop offset="1.00" stop-color="rgb(39,39,39)"/></linearGradient>
<rect x="0" y="996" width="1920" height="1" fill="url(#st17)"/>
<linearGradient id="st18" x1="0" x2="1" y1="0" y2="0"><stop offset="0.00" stop-color="rgb(16,16,16)"/><stop offset="0.17" stop-color="rgb(38,38,38)"/><stop offset="0.33" stop-color="rgb(16,16,16)"/><stop offset="0.50" stop-color="rgb(30,30,30)"/><stop offset="0.67" stop-color="rgb(27,27,27)"/><stop offset="0.83" stop-color="rgb(23,23,23)"/><stop offset="1.00" stop-color="rgb(17,17,17)"/></linearGradient>
<rect x="0" y="997" width="1920" height="1" fill="url(#st18)"/>
<linearGradient id="st19" x1="0" x2="1" y1="0" y2="0"><stop offset="0.00" stop-color="rgb(24,24,24)"/><stop offset="0.17" stop-color="rgb(30,30,30)"/><stop offset="0.33" stop-color="rgb(42,42,42)"/><stop offset="0.50" stop-color="rgb(57,57,57)"/><stop offset="0.67" stop-color="rgb(19,19,19)"/><stop offset="0.83" stop-color="rgb(27,27,27)"/><stop offset="1.00" stop-color="rgb(48,48,48)"/></linearGradient>
<rect x="0" y="998" width="1920" height="1" fill="url(#st19)"/>
<linearGradient id="st20" x1="0" x2="1" y1="0" y2="0"><stop offset="0.00" stop-color="rgb(17,17,17)"/><stop offset="0.17" stop-color="rgb(35,35,35)"/><stop offset="0.33" stop-color="rgb(20,20,20)"/><stop offset="0.50" stop-color="rgb(25,25,25)"/><stop offset="0.67" stop-color="rgb(32,32,32)"/><stop offset="0.83" stop-color="rgb(24,24,24)"/><stop offset="1.00" stop-color="rgb(31,31,31)"/></linearGradient>
<rect x="0" y="999" width="1920" height="1" fill="url(#st20)"/>
<linearGradient id="st21" x1="0" x2="1" y1="0" y2="0"><stop offset="0.00" stop-color="rgb(13,13,13)"/><stop offset="0.17" stop-color="rgb(10,10,10)"/><stop offset="0.33" stop-color="rgb(12,12,12)"/><stop offset="0.50" stop-color="rgb(20,20,20)"/><stop offset="0.67" stop-color="rgb(10,10,10)"/><stop offset="0.83" stop-color="rgb(18,18,18)"/><stop offset="1.00" stop-color="rgb(11,11,11)"/></linearGradient>
<rect x="0" y="1000" width="1920" height="1" fill="url(#st21)"/>
<linearGradient id="st22" x1="0" x2="1" y1="0" y2="0"><stop offset="0.00" stop-color="rgb(24,24,24)"/><stop offset="0.17" stop-color="rgb(31,31,31)"/><stop offset="0.33" stop-color="rgb(31,31,31)"/><stop offset="0.50" stop-color="rgb(30,30,30)"/><stop offset="0.67" stop-color="rgb(17,17,17)"/><stop offset="0.83" stop-color="rgb(27,27,27)"/><stop offset="1.00" stop-color="rgb(56,56,56)"/></linearGradient>
<rect x="0" y="1001" width="1920" height="1" fill="url(#st22)"/>
<linearGradient id="st23" x1="0" x2="1" y1="0" y2="0"><stop offset="0.00" stop-color="rgb(51,51,51)"/><stop offset="0.17" stop-color="rgb(23,23,23)"/><stop offset="0.33" stop-color="rgb(39,39,39)"/><stop offset="0.50" stop-color="rgb(25,25,25)"/><stop offset="0.67" stop-color="rgb(33,33,33)"/><stop offset="0.83" stop-color="rgb(29,29,29)"/><stop offset="1.00" stop-color="rgb(34,34,34)"/></linearGradient>
<rect x="0" y="1002" width="1920" height="1" fill="url(#st23)"/>
<linearGradient id="st24" x1="0" x2="1" y1="0" y2="0"><stop offset="0.00" stop-color="rgb(47,47,47)"/><stop offset="0.17" stop-color="rgb(8,8,8)"/><stop offset="0.33" stop-color="rgb(18,18,18)"/><stop offset="0.50" stop-color="rgb(8,8,8)"/><stop offset="0.67" stop-color="rgb(40,40,40)"/><stop offset="0.83" stop-color="rgb(9,9,9)"/><stop offset="1.00" stop-color="rgb(16,16,16)"/></linearGradient>
<rect x="0" y="1003" width="1920" height="1" fill="url(#st24)"/>
<linearGradient id="st25" x1="0" x2="1" y1="0" y2="0"><stop offset="0.00" stop-color="rgb(28,28,28)"/><stop offset="0.17" stop-color="rgb(18,18,18)"/><stop offset="0.33" stop-color="rgb(27,27,27)"/><stop offset="0.50" stop-color="rgb(48,48,48)"/><stop offset="0.67" stop-color="rgb(18,18,18)"/><stop offset="0.83" stop-color="rgb(38,38,38)"/><stop offset="1.00" stop-color="rgb(25,25,25)"/></linearGradient>
<rect x="0" y="1004" width="1920" height="1" fill="url(#st25)"/>
<linearGradient id="st26" x1="0" x2="1" y1="0" y2="0"><stop offset="0.00" stop-color="rgb(34,34,34)"/><stop offset="0.17" stop-color="rgb(61,61,61)"/><stop offset="0.33" stop-color="rgb(56,56,56)"/><stop offset="0.50" stop-color="rgb(51,51,51)"/><stop offset="0.67" stop-color="rgb(45,45,45)"/><stop offset="0.83" stop-color="rgb(41,41,41)"/><stop offset="1.00" stop-color="rgb(34,34,34)"/></linearGradient>
<rect x="0" y="1005" width="1920" height="1" fill="url(#st26)"/>
<linearGradient id="st27" x1="0" x2="1" y1="0" y2="0"><stop offset="0.00" stop-color="rgb(42,42,42)"/><stop offset="0.17" stop-color="rgb(33,33,33)"/><stop offset="0.33" stop-color="rgb(41,41,41)"/><stop offset="0.50" stop-color="rgb(32,32,32)"/><stop offset="0.67" stop-color="rgb(37,37,37)"/><stop offset="0.83" stop-color="rgb(57,57,57)"/><stop offset="1.00" stop-color="rgb(25,25,25)"/></linearGradient>
<rect x="0" y="1006" width="1920" height="1" fill="url(#st27)"/>
<linearGradient id="st28" x1="0" x2="1" y1="0" y2="0"><stop offset="0.00" stop-color="rgb(15,15,15)"/><stop offset="0.17" stop-color="rgb(28,28,28)"/><stop offset="0.33" stop-color="rgb(49,49,49)"/><stop offset="0.50" stop-color="rgb(30,30,30)"/><stop offset="0.67" stop-color="rgb(39,39,39)"/><stop offset="0.83" stop-color="rgb(30,30,30)"/><stop offset="1.00" stop-color="rgb(26,26,26)"/></linearGradient>
<rect x="0" y="1007" width="1920" height="1" fill="url(#st28)"/>
<linearGradient id="st29" x1="0" x2="1" y1="0" y2="0"><stop offset="0.00" stop-color="rgb(40,40,40)"/><stop offset="0.17" stop-color="rgb(19,19,19)"/><stop offset="0.33" stop-color="rgb(50,50,50)"/><stop offset="0.50" stop-color="rgb(29,29,29)"/><stop offset="0.67" stop-color="rgb(15,15,15)"/><stop offset="0.83" stop-color="rgb(28,28,28)"/><stop offset="1.00" stop-color="rgb(42,42,42)"/></linearGradient>
<rect x="0" y="1008" width="1920" height="1" fill="url(#st29)"/>
<linearGradient id="st30" x1="0" x2="1" y1="0" y2="0"><stop offset="0.00" stop-color="rgb(28,28,28)"/><stop offset="0.17" stop-color="rgb(31,31,31)"/><stop offset="0.33" stop-color="rgb(28,28,28)"/><stop offset="0.50" stop-color="rgb(19,19,19)"/><stop offset="0.67" stop-color="rgb(29,29,29)"/><stop offset="0.83" stop-color="rgb(18,18,18)"/><stop offset="1.00" stop-color="rgb(46,46,46)"/></linearGradient>
<rect x="0" y="1009" width="1920" height="1" fill="url(#st30)"/>
<linearGradient id="st31" x1="0" x2="1" y1="0" y2="0"><stop offset="0.00" stop-color="rgb(29,29,29)"/><stop offset="0.17" stop-color="rgb(17,17,17)"/><stop offset="0.33" stop-color="rgb(27,27,27)"/><stop offset="0.50" stop-color="rgb(14,14,14)"/><stop offset="0.67" stop-color="rgb(21,21,21)"/><stop offset="0.83" stop-color="rgb(21,21,21)"/><stop offset="1.00" stop-color="rgb(16,16,16)"/></linearGradient>
<rect x="0" y="1010" width="1920" height="1" fill="url(#st31)"/>
<linearGradient id="st32" x1="0" x2="1" y1="0" y2="0"><stop offset="0.00" stop-color="rgb(20,20,20)"/><stop offset="0.17" stop-color="rgb(37,37,37)"/><stop offset="0.33" stop-color="rgb(41,41,41)"/><stop offset="0.50" stop-color="rgb(23,23,23)"/><stop offset="0.67" stop-color="rgb(21,21,21)"/><stop offset="0.83" stop-color="rgb(35,35,35)"/><stop offset="1.00" stop-color="rgb(16,16,16)"/></linearGradient>
<rect x="0" y="1011" width="1920" height="1" fill="url(#st32)"/>
<linearGradient id="st33" x1="0" x2="1" y1="0" y2="0"><stop offset="0.00" stop-color="rgb(24,24,24)"/><stop offset="0.17" stop-color="rgb(33,33,33)"/><stop offset="0.33" stop-color="rgb(34,34,34)"/><stop offset="0.50" stop-color="rgb(22,22,22)"/><stop offset="0.67" stop-color="rgb(30,30,30)"/><stop offset="0.83" stop-color="rgb(31,31,31)"/><stop offset="1.00" stop-color="rgb(16,16,16)"/></linearGradient>
<rect x="0" y="1012" width="1920" height="1" fill="url(#st33)"/>
<linearGradient id="st34" x1="0" x2="1" y1="0" y2="0"><stop offset="0.00" stop-color="rgb(29,29,29)"/><stop offset="0.17" stop-color="rgb(46,46,46)"/><stop offset="0.33" stop-color="rgb(18,18,18)"/><stop offset="0.50" stop-color="rgb(23,23,23)"/><stop offset="0.67" stop-color="rgb(21,21,21)"/><stop offset="0.83" stop-color="rgb(32,32,32)"/><stop offset="1.00" stop-color="rgb(18,18,18)"/></linearGradient>
<rect x="0" y="1013" width="1920" height="1" fill="url(#st34)"/>
<linearGradient id="st35" x1="0" x2="1" y1="0" y2="0"><stop offset="0.00" stop-color="rgb(32,32,32)"/><stop offset="0.17" stop-color="rgb(30,30,30)"/><stop offset="0.33" stop-color="rgb(21,21,21)"/><stop offset="0.50" stop-color="rgb(31,31,31)"/><stop offset="0.67" stop-color="rgb(22,22,22)"/><stop offset="0.83" stop-color="rgb(26,26,26)"/><stop offset="1.00" stop-color="rgb(21,21,21)"/></linearGradient>
<rect x="0" y="1014" width="1920" height="1" fill="url(#st35)"/>
<linearGradient id="st36" x1="0" x2="1" y1="0" y2="0"><stop offset="0.00" stop-color="rgb(19,19,19)"/><stop offset="0.17" stop-color="rgb(15,15,15)"/><stop offset="0.33" stop-color="rgb(55,55,55)"/><stop offset="0.50" stop-color="rgb(51,51,51)"/><stop offset="0.67" stop-color="rgb(18,18,18)"/><stop offset="0.83" stop-color="rgb(29,29,29)"/><stop offset="1.00" stop-color="rgb(24,24,24)"/></linearGradient>
<rect x="0" y="1015" width="1920" height="1" fill="url(#st36)"/>
<linearGradient id="st37" x1="0" x2="1" y1="0" y2="0"><stop offset="0.00" stop-color="rgb(54,54,54)"/><stop offset="0.17" stop-color="rgb(31,31,31)"/><stop offset="0.33" stop-color="rgb(36,36,36)"/><stop offset="0.50" stop-color="rgb(32,32,32)"/><stop offset="0.67" stop-color="rgb(46,46,46)"/><stop offset="0.83" stop-color="rgb(29,29,29)"/><stop offset="1.00" stop-color="rgb(26,26,26)"/></linearGradient>
<rect x="0" y="1016" width="1920" height="1" fill="url(#st37)"/>
<linearGradient id="st38" x1="0" x2="1" y1="0" y2="0"><stop offset="0.00" stop-color="rgb(38,38,38)"/><stop offset="0.17" stop-color="rgb(38,38,38)"/><stop offset="0.33" stop-color="rgb(37,37,37)"/><stop offset="0.50" stop-color="rgb(33,33,33)"/><stop offset="0.67" stop-color="rgb(33,33,33)"/><stop offset="0.83" stop-color="rgb(21,21,21)"/><stop offset="1.00" stop-color="rgb(34,34,34)"/></linearGradient>
<rect x="0" y="1017" width="1920" height="1" fill="url(#st38)"/>
</g>
<text x="30.8" y="1006" font-size="15" fill="#7c7c7c" font-weight="bold" font-style="normal" text-anchor="start" textLength="87.5" lengthAdjust="spacingAndGlyphs" >Design code:</text>
<text x="125.3" y="1006" font-size="15" fill="#ffffff" font-weight="bold" font-style="normal" text-anchor="start" textLength="19" lengthAdjust="spacingAndGlyphs" >EN</text>
<text x="170" y="1006" font-size="15" fill="#7c7c7c" font-weight="bold" font-style="normal" text-anchor="start" textLength="61.3" lengthAdjust="spacingAndGlyphs" >Analysis:</text>
<text x="238" y="1006" font-size="15" fill="#ffffff" font-weight="bold" font-style="normal" text-anchor="start" textLength="89.5" lengthAdjust="spacingAndGlyphs" >Stress, strain</text>
<text x="353" y="1006" font-size="15" fill="#7c7c7c" font-weight="bold" font-style="normal" text-anchor="start" textLength="89" lengthAdjust="spacingAndGlyphs" >Load effects:</text>
<text x="449" y="1006" font-size="15" fill="#ffffff" font-weight="bold" font-style="normal" text-anchor="start" textLength="98" lengthAdjust="spacingAndGlyphs" >In equilibrium</text>
<text x="572" y="1006" font-size="15" fill="#7c7c7c" font-weight="bold" font-style="normal" text-anchor="start" textLength="40" lengthAdjust="spacingAndGlyphs" >Units:</text>
<text x="622" y="1006" font-size="15" fill="#ffffff" font-weight="bold" font-style="normal" text-anchor="start" textLength="28" lengthAdjust="spacingAndGlyphs" >mm</text>
<rect x="1323.5" y="268.5" width="486.5" height="45" fill="#f0f0f0" />
<rect x="1323.5" y="313.5" width="486.5" height="36" fill="#ebebeb" />
<line x1="1323" y1="268.5" x2="1810.5" y2="268.5" stroke="#b4b4b4" stroke-width="1" />
<line x1="1323" y1="313.5" x2="1810.5" y2="313.5" stroke="#b4b4b4" stroke-width="1" />
<line x1="1323" y1="349.5" x2="1810.5" y2="349.5" stroke="#b4b4b4" stroke-width="1" />
<line x1="1323" y1="385.5" x2="1810.5" y2="385.5" stroke="#b4b4b4" stroke-width="1" />
<line x1="1323" y1="421.5" x2="1810.5" y2="421.5" stroke="#b4b4b4" stroke-width="1" />
<line x1="1323" y1="457" x2="1810.5" y2="457" stroke="#b4b4b4" stroke-width="1" />
<line x1="1323" y1="459.5" x2="1810.5" y2="459.5" stroke="#c8c8c8" stroke-width="1" />
<line x1="1323.5" y1="268" x2="1323.5" y2="457.5" stroke="#b4b4b4" stroke-width="1" />
<line x1="1359.5" y1="268" x2="1359.5" y2="457.5" stroke="#b4b4b4" stroke-width="1" />
<line x1="1433.5" y1="268" x2="1433.5" y2="457.5" stroke="#b4b4b4" stroke-width="1" />
<line x1="1495.5" y1="268" x2="1495.5" y2="457.5" stroke="#b4b4b4" stroke-width="1" />
<line x1="1557.5" y1="268" x2="1557.5" y2="457.5" stroke="#b4b4b4" stroke-width="1" />
<line x1="1620.5" y1="268" x2="1620.5" y2="457.5" stroke="#b4b4b4" stroke-width="1" />
<line x1="1683.5" y1="268" x2="1683.5" y2="457.5" stroke="#b4b4b4" stroke-width="1" />
<line x1="1745.5" y1="268" x2="1745.5" y2="457.5" stroke="#b4b4b4" stroke-width="1" />
<line x1="1807.5" y1="268" x2="1807.5" y2="457.5" stroke="#b4b4b4" stroke-width="1" />
<line x1="1810" y1="268" x2="1810" y2="460" stroke="#c8c8c8" stroke-width="1" />
<text x="1365.8" y="297" font-size="15" fill="#3a3a3a" font-weight="bold" font-style="normal" text-anchor="start" textLength="58" lengthAdjust="spacingAndGlyphs" >Member</text>
<text x="1439.8" y="287" font-size="15" fill="#3a3a3a" font-weight="bold" font-style="normal" text-anchor="start" textLength="10" lengthAdjust="spacingAndGlyphs" >N</text>
<text x="1439.8" y="307.3" font-size="15" fill="#3a3a3a" font-weight="bold" font-style="normal" text-anchor="start" textLength="29.5" lengthAdjust="spacingAndGlyphs" >[kN]</text>
<text x="1501.8" y="287" font-size="15" fill="#3a3a3a" font-weight="bold" font-style="normal" text-anchor="start" textLength="18" lengthAdjust="spacingAndGlyphs" >Vy</text>
<text x="1501.8" y="307.3" font-size="15" fill="#3a3a3a" font-weight="bold" font-style="normal" text-anchor="start" textLength="30" lengthAdjust="spacingAndGlyphs" >[kN]</text>
<text x="1563.8" y="287" font-size="15" fill="#3a3a3a" font-weight="bold" font-style="normal" text-anchor="start" textLength="17" lengthAdjust="spacingAndGlyphs" >Vz</text>
<text x="1563.8" y="307.3" font-size="15" fill="#3a3a3a" font-weight="bold" font-style="normal" text-anchor="start" textLength="30" lengthAdjust="spacingAndGlyphs" >[kN]</text>
<text x="1626.8" y="287" font-size="15" fill="#3a3a3a" font-weight="bold" font-style="normal" text-anchor="start" textLength="21.7" lengthAdjust="spacingAndGlyphs" >Mx</text>
<text x="1626.8" y="307.3" font-size="15" fill="#3a3a3a" font-weight="bold" font-style="normal" text-anchor="start" textLength="44.4" lengthAdjust="spacingAndGlyphs" >[kNm]</text>
<text x="1689.8" y="287" font-size="15" fill="#3a3a3a" font-weight="bold" font-style="normal" text-anchor="start" textLength="22.5" lengthAdjust="spacingAndGlyphs" >My</text>
<text x="1689.8" y="307.3" font-size="15" fill="#3a3a3a" font-weight="bold" font-style="normal" text-anchor="start" textLength="44.4" lengthAdjust="spacingAndGlyphs" >[kNm]</text>
<text x="1751.8" y="287" font-size="15" fill="#3a3a3a" font-weight="bold" font-style="normal" text-anchor="start" textLength="21.7" lengthAdjust="spacingAndGlyphs" >Mz</text>
<text x="1751.8" y="307.3" font-size="15" fill="#3a3a3a" font-weight="bold" font-style="normal" text-anchor="start" textLength="44.4" lengthAdjust="spacingAndGlyphs" >[kNm]</text>
<path d="M1338.5,326.5 L1344.5,332 L1338.5,337.5" fill="none" stroke="#333" stroke-width="1.6"/>
<text x="1365.3" y="337.7" font-size="15" fill="#4a4a4a" font-weight="normal" font-style="normal" text-anchor="start" textLength="60" lengthAdjust="spacingAndGlyphs" >C / Begin</text>
<text x="1439.8" y="337.7" font-size="15" fill="#4a4a4a" font-weight="normal" font-style="normal" text-anchor="start" textLength="25.5" lengthAdjust="spacingAndGlyphs" >80.0</text>
<text x="1501.8" y="337.7" font-size="15" fill="#4a4a4a" font-weight="normal" font-style="normal" text-anchor="start" textLength="18.7" lengthAdjust="spacingAndGlyphs" >0.0</text>
<text x="1563.8" y="337.7" font-size="15" fill="#4a4a4a" font-weight="normal" font-style="normal" text-anchor="start" textLength="18.7" lengthAdjust="spacingAndGlyphs" >0.0</text>
<text x="1626.8" y="337.7" font-size="15" fill="#4a4a4a" font-weight="normal" font-style="normal" text-anchor="start" textLength="18.7" lengthAdjust="spacingAndGlyphs" >0.0</text>
<text x="1689.8" y="337.7" font-size="15" fill="#4a4a4a" font-weight="normal" font-style="normal" text-anchor="start" textLength="18.7" lengthAdjust="spacingAndGlyphs" >0.0</text>
<text x="1751.8" y="337.7" font-size="15" fill="#4a4a4a" font-weight="normal" font-style="normal" text-anchor="start" textLength="18.7" lengthAdjust="spacingAndGlyphs" >0.0</text>
<text x="1365.3" y="373.7" font-size="15" fill="#4a4a4a" font-weight="normal" font-style="normal" text-anchor="start" textLength="47.3" lengthAdjust="spacingAndGlyphs" >C / End</text>
<text x="1439.8" y="373.7" font-size="15" fill="#4a4a4a" font-weight="normal" font-style="normal" text-anchor="start" textLength="18.7" lengthAdjust="spacingAndGlyphs" >0.0</text>
<text x="1501.8" y="373.7" font-size="15" fill="#4a4a4a" font-weight="normal" font-style="normal" text-anchor="start" textLength="18.7" lengthAdjust="spacingAndGlyphs" >0.0</text>
<text x="1563.8" y="373.7" font-size="15" fill="#4a4a4a" font-weight="normal" font-style="normal" text-anchor="start" textLength="18.7" lengthAdjust="spacingAndGlyphs" >0.0</text>
<text x="1626.8" y="373.7" font-size="15" fill="#4a4a4a" font-weight="normal" font-style="normal" text-anchor="start" textLength="18.7" lengthAdjust="spacingAndGlyphs" >0.0</text>
<text x="1689.8" y="373.7" font-size="15" fill="#4a4a4a" font-weight="normal" font-style="normal" text-anchor="start" textLength="18.7" lengthAdjust="spacingAndGlyphs" >0.0</text>
<text x="1751.8" y="373.7" font-size="15" fill="#4a4a4a" font-weight="normal" font-style="normal" text-anchor="start" textLength="18.7" lengthAdjust="spacingAndGlyphs" >0.0</text>
<text x="1365.3" y="409.7" font-size="15" fill="#4a4a4a" font-weight="normal" font-style="normal" text-anchor="start" textLength="47.3" lengthAdjust="spacingAndGlyphs" >B / End</text>
<text x="1439.8" y="409.7" font-size="15" fill="#4a4a4a" font-weight="normal" font-style="normal" text-anchor="start" textLength="18.7" lengthAdjust="spacingAndGlyphs" >0.0</text>
<text x="1501.8" y="409.7" font-size="15" fill="#4a4a4a" font-weight="normal" font-style="normal" text-anchor="start" textLength="18.7" lengthAdjust="spacingAndGlyphs" >0.0</text>
<text x="1563.8" y="409.7" font-size="15" fill="#4a4a4a" font-weight="normal" font-style="normal" text-anchor="start" textLength="32.4" lengthAdjust="spacingAndGlyphs" >-40.0</text>
<text x="1626.8" y="409.7" font-size="15" fill="#4a4a4a" font-weight="normal" font-style="normal" text-anchor="start" textLength="18.7" lengthAdjust="spacingAndGlyphs" >0.0</text>
<text x="1689.8" y="409.7" font-size="15" fill="#4a4a4a" font-weight="normal" font-style="normal" text-anchor="start" textLength="26.4" lengthAdjust="spacingAndGlyphs" >45.0</text>
<text x="1751.8" y="409.7" font-size="15" fill="#4a4a4a" font-weight="normal" font-style="normal" text-anchor="start" textLength="18.7" lengthAdjust="spacingAndGlyphs" >0.0</text>
<text x="1365.3" y="445.7" font-size="15" fill="#4a4a4a" font-weight="normal" font-style="normal" text-anchor="start" textLength="55.3" lengthAdjust="spacingAndGlyphs" >B1 / End</text>
<text x="1439.8" y="445.7" font-size="15" fill="#4a4a4a" font-weight="normal" font-style="normal" text-anchor="start" textLength="18.7" lengthAdjust="spacingAndGlyphs" >0.0</text>
<text x="1501.8" y="445.7" font-size="15" fill="#4a4a4a" font-weight="normal" font-style="normal" text-anchor="start" textLength="18.7" lengthAdjust="spacingAndGlyphs" >0.0</text>
<text x="1563.8" y="445.7" font-size="15" fill="#4a4a4a" font-weight="normal" font-style="normal" text-anchor="start" textLength="32.4" lengthAdjust="spacingAndGlyphs" >-40.0</text>
<text x="1626.8" y="445.7" font-size="15" fill="#4a4a4a" font-weight="normal" font-style="normal" text-anchor="start" textLength="18.7" lengthAdjust="spacingAndGlyphs" >0.0</text>
<text x="1689.8" y="445.7" font-size="15" fill="#4a4a4a" font-weight="normal" font-style="normal" text-anchor="start" textLength="26.4" lengthAdjust="spacingAndGlyphs" >45.0</text>
<text x="1751.8" y="445.7" font-size="15" fill="#4a4a4a" font-weight="normal" font-style="normal" text-anchor="start" textLength="18.7" lengthAdjust="spacingAndGlyphs" >0.0</text>
<text x="1311.5" y="517.7" font-size="15" fill="#505050" font-weight="normal" font-style="normal" text-anchor="start" textLength="394" lengthAdjust="spacingAndGlyphs" >Values in disabled cells are not taken into account in CBFEM</text>
<text x="1311.5" y="537.5" font-size="15" fill="#505050" font-weight="normal" font-style="normal" text-anchor="start" textLength="404.5" lengthAdjust="spacingAndGlyphs" >analysis. Members can be loaded only by that components of</text>
<text x="1311.5" y="557.3" font-size="15" fill="#505050" font-weight="normal" font-style="normal" text-anchor="start" textLength="386" lengthAdjust="spacingAndGlyphs" >internal forces which are defined in member &quot;Model type&quot;.</text>
<text x="1311.7" y="840" font-size="17.5" fill="#3c3c3c" font-weight="bold" font-style="normal" text-anchor="start" textLength="157" lengthAdjust="spacingAndGlyphs" >Unbalanced forces</text>
<rect x="1323.5" y="858.5" width="413" height="44.5" fill="#f0f0f0" />
<line x1="1323" y1="858.5" x2="1737" y2="858.5" stroke="#b4b4b4" stroke-width="1" />
<line x1="1323" y1="903" x2="1737" y2="903" stroke="#b4b4b4" stroke-width="1" />
<line x1="1323" y1="939.5" x2="1737" y2="939.5" stroke="#a8a8a8" stroke-width="2" />
<line x1="1323.5" y1="858" x2="1323.5" y2="939" stroke="#b4b4b4" stroke-width="1" />
<line x1="1392.5" y1="858" x2="1392.5" y2="939" stroke="#b4b4b4" stroke-width="1" />
<line x1="1461.3" y1="858" x2="1461.3" y2="939" stroke="#b4b4b4" stroke-width="1" />
<line x1="1530" y1="858" x2="1530" y2="939" stroke="#b4b4b4" stroke-width="1" />
<line x1="1598.6" y1="858" x2="1598.6" y2="939" stroke="#b4b4b4" stroke-width="1" />
<line x1="1667.4" y1="858" x2="1667.4" y2="939" stroke="#b4b4b4" stroke-width="1" />
<line x1="1736.5" y1="858" x2="1736.5" y2="939" stroke="#b4b4b4" stroke-width="1" />
<text x="1329.7" y="877" font-size="15" fill="#3a3a3a" font-weight="bold" font-style="normal" text-anchor="start" textLength="9.5" lengthAdjust="spacingAndGlyphs" >X</text>
<text x="1329.7" y="898" font-size="15" fill="#3a3a3a" font-weight="bold" font-style="normal" text-anchor="start" textLength="29.8" lengthAdjust="spacingAndGlyphs" >[kN]</text>
<text x="1329.7" y="928" font-size="15" fill="#4a4a4a" font-weight="normal" font-style="normal" text-anchor="start" textLength="18" lengthAdjust="spacingAndGlyphs" >0.0</text>
<text x="1398.7" y="877" font-size="15" fill="#3a3a3a" font-weight="bold" font-style="normal" text-anchor="start" textLength="9.5" lengthAdjust="spacingAndGlyphs" >Y</text>
<text x="1398.7" y="898" font-size="15" fill="#3a3a3a" font-weight="bold" font-style="normal" text-anchor="start" textLength="29.8" lengthAdjust="spacingAndGlyphs" >[kN]</text>
<text x="1398.7" y="928" font-size="15" fill="#4a4a4a" font-weight="normal" font-style="normal" text-anchor="start" textLength="18" lengthAdjust="spacingAndGlyphs" >0.0</text>
<text x="1467.5" y="877" font-size="15" fill="#3a3a3a" font-weight="bold" font-style="normal" text-anchor="start" textLength="9.5" lengthAdjust="spacingAndGlyphs" >Z</text>
<text x="1467.5" y="898" font-size="15" fill="#3a3a3a" font-weight="bold" font-style="normal" text-anchor="start" textLength="29.8" lengthAdjust="spacingAndGlyphs" >[kN]</text>
<text x="1467.5" y="928" font-size="15" fill="#4a4a4a" font-weight="normal" font-style="normal" text-anchor="start" textLength="18" lengthAdjust="spacingAndGlyphs" >0.0</text>
<text x="1536.2" y="877" font-size="15" fill="#3a3a3a" font-weight="bold" font-style="normal" text-anchor="start" textLength="21.7" lengthAdjust="spacingAndGlyphs" >Mx</text>
<text x="1536.2" y="898" font-size="15" fill="#3a3a3a" font-weight="bold" font-style="normal" text-anchor="start" textLength="44.4" lengthAdjust="spacingAndGlyphs" >[kNm]</text>
<text x="1536.2" y="928" font-size="15" fill="#4a4a4a" font-weight="normal" font-style="normal" text-anchor="start" textLength="18" lengthAdjust="spacingAndGlyphs" >0.0</text>
<text x="1604.8" y="877" font-size="15" fill="#3a3a3a" font-weight="bold" font-style="normal" text-anchor="start" textLength="22.5" lengthAdjust="spacingAndGlyphs" >My</text>
<text x="1604.8" y="898" font-size="15" fill="#3a3a3a" font-weight="bold" font-style="normal" text-anchor="start" textLength="44.4" lengthAdjust="spacingAndGlyphs" >[kNm]</text>
<text x="1604.8" y="928" font-size="15" fill="#4a4a4a" font-weight="normal" font-style="normal" text-anchor="start" textLength="18" lengthAdjust="spacingAndGlyphs" >0.0</text>
<text x="1673.6000000000001" y="877" font-size="15" fill="#3a3a3a" font-weight="bold" font-style="normal" text-anchor="start" textLength="21.7" lengthAdjust="spacingAndGlyphs" >Mz</text>
<text x="1673.6000000000001" y="898" font-size="15" fill="#3a3a3a" font-weight="bold" font-style="normal" text-anchor="start" textLength="44.4" lengthAdjust="spacingAndGlyphs" >[kNm]</text>
<text x="1673.6000000000001" y="928" font-size="15" fill="#4a4a4a" font-weight="normal" font-style="normal" text-anchor="start" textLength="18" lengthAdjust="spacingAndGlyphs" >0.0</text>
<rect x="1116" y="67" width="102" height="120" fill="none" rx="7" stroke="#ff0000" stroke-width="6"/>
<rect x="1297" y="808" width="462" height="151" fill="none" rx="7" stroke="#ff0000" stroke-width="6"/>
<text x="1766" y="1006" font-size="15" fill="#f26f23" font-weight="normal" font-style="normal" text-anchor="start" textLength="33" lengthAdjust="spacingAndGlyphs" >www.</text>
<text x="1799" y="1006" font-size="15" fill="#ffffff" font-weight="normal" font-style="normal" text-anchor="start" textLength="71" lengthAdjust="spacingAndGlyphs" >ideastatica</text>
<text x="1870" y="1006" font-size="15" fill="#f26f23" font-weight="normal" font-style="normal" text-anchor="start" textLength="36" lengthAdjust="spacingAndGlyphs" >.com</text>
</svg></body></html>
